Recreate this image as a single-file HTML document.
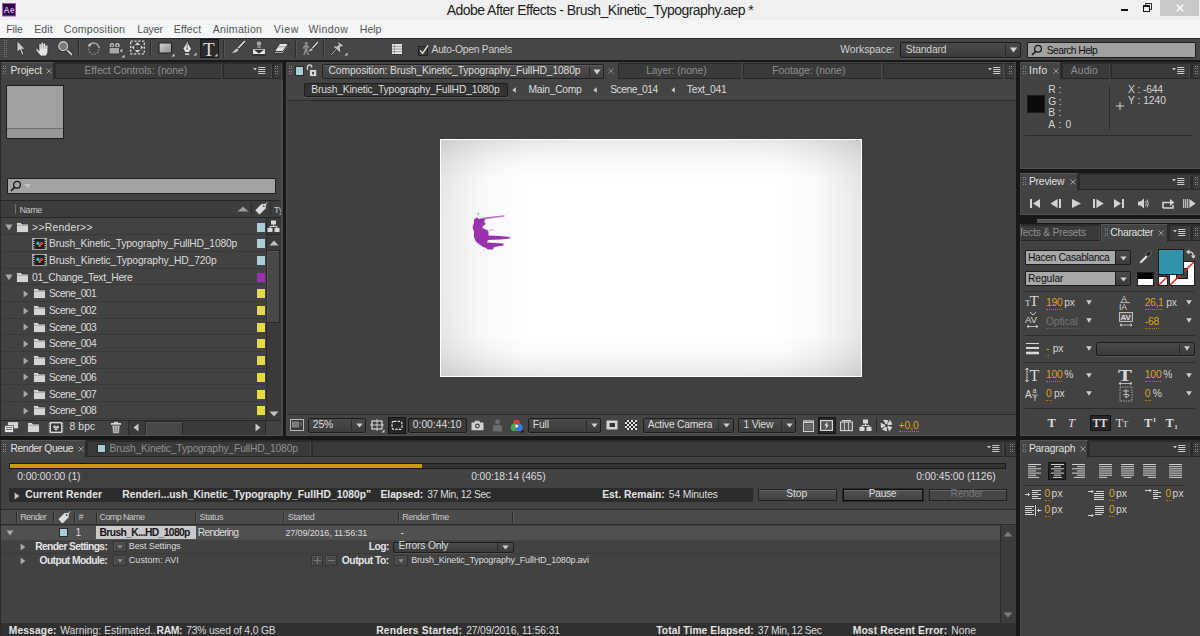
<!DOCTYPE html>
<html>
<head>
<meta charset="utf-8">
<title>Adobe After Effects</title>
<style>
*{box-sizing:border-box;margin:0;padding:0}
html,body{width:1200px;height:636px;overflow:hidden;background:#181818;font-family:"Liberation Sans",sans-serif;font-size:10.3px;color:#d0d0d0}
.a{position:absolute}
.t{position:absolute;white-space:nowrap;line-height:14px;height:14px}
.b{font-weight:bold}
#title{left:0;top:0;width:1200px;height:20px;background:#efefef}
#menu{left:0;top:20px;width:1200px;height:18px;background:#f5f6f7}
#menu .t{color:#545454;font-size:10.6px;top:2px}
#toolbar{left:0;top:38px;width:1200px;height:22px;background:#464646;border-top:1px solid #2a2a2a}
.panel{background:#424242}
.tabbar{background:#2c2c2c}
.tab{background:#424242}
.or{color:#dfa21c}
.dim{color:#8e8e8e}

.sep{top:2px;width:2px;height:18px;background:#2e2e2e;border-right:1px solid #555}
.grip::before,.grip::after{content:"";position:absolute;top:0;width:1px;height:100%;background:repeating-linear-gradient(180deg,#787878 0,#787878 1px,transparent 1px,transparent 2px)}.grip::before{left:0}.grip::after{left:2px}
.dd{background:linear-gradient(#4a4a4a,#3b3b3b);border:1px solid #1c1c1c;border-radius:2px;box-shadow:0 1px 0 #555}

.itab{background:#3a3a3a;border-top:1px solid #2a2a2a;border-left:1px solid #2c2c2c;border-bottom:1px solid #262626;border-right:1px solid #474747}
.grip2{width:3px;height:8px}.grip2::before,.grip2::after{content:"";position:absolute;top:0;width:1px;height:100%;background:repeating-linear-gradient(180deg,#8c8c8c 0,#8c8c8c 1px,transparent 1px,transparent 2.3px)}.grip2::before{left:0}.grip2::after{left:2px}
#toolbar>*{margin-top:-1px}#toolbar>.t{margin-top:0.3px}#toolbar>.cb{margin-top:0}
</style>
<style id="fit">
#ttl{left:446.80px!important;letter-spacing:-0.548px}
#mn0{left:6.20px!important;letter-spacing:-0.120px}
#mn1{left:34.20px!important;letter-spacing:0.084px}
#mn2{left:63.80px!important;letter-spacing:0.228px}
#mn3{left:137.20px!important;letter-spacing:-0.180px}
#mn4{left:173.80px!important;letter-spacing:0.082px}
#mn5{left:212.80px!important;letter-spacing:0.255px}
#mn6{left:273.80px!important;letter-spacing:0.600px}
#mn7{left:308.50px!important;letter-spacing:0.335px}
#mn8{left:359.80px!important;letter-spacing:-0.024px}
#aop{left:431.50px!important;letter-spacing:-0.241px}
#wsl{left:840.30px!important;letter-spacing:0.001px}
#std{left:905.80px!important;letter-spacing:-0.162px}
#sh{left:1046.80px!important;letter-spacing:-0.570px}
#pj{left:10.50px!important;letter-spacing:-0.052px}
#ec{left:84.50px!important;letter-spacing:-0.006px}
#nm{left:19.50px!important;letter-spacing:-0.404px}
#f0{left:32.10px!important;letter-spacing:0.277px}
#c1{left:49.00px!important;letter-spacing:-0.176px}
#c2{left:49.00px!important;letter-spacing:-0.150px}
#f1{left:32.00px!important;letter-spacing:-0.290px}
#bpc{left:69.50px!important;letter-spacing:0.119px}
#cpt{left:42.50px!important;letter-spacing:-0.112px}
#bc0{left:25.20px!important;letter-spacing:-0.171px}
#bc1{left:242.50px!important;letter-spacing:-0.280px}
#bc2{left:324.20px!important;letter-spacing:-0.501px}
#bc3{left:400.80px!important;letter-spacing:-0.262px}
#ly{left:360.20px!important;letter-spacing:-0.073px}
#ft{left:486.20px!important;letter-spacing:0.001px}
#zm{left:26.80px!important;letter-spacing:-0.070px}
#tc{left:126.80px!important;letter-spacing:0.003px}
#fl{left:246.80px!important;letter-spacing:-0.148px}
#ac{left:361.80px!important;letter-spacing:-0.241px}
#vw{left:457.50px!important;letter-spacing:-0.172px}
#ex{left:612.50px!important;letter-spacing:-0.007px}
#inf{left:8.90px!important;letter-spacing:0.428px}
#aud{left:50.70px!important;letter-spacing:0.191px}
#iR{left:28.30px!important;letter-spacing:-0.057px}
#iG{left:28.30px!important;letter-spacing:-0.200px}
#iB{left:28.30px!important;letter-spacing:0.135px}
#iA{left:28.30px!important;letter-spacing:0.558px}
#iX{left:108.10px!important;letter-spacing:-0.158px}
#iY{left:108.10px!important;letter-spacing:-0.046px}
#prv{left:8.90px!important;letter-spacing:-0.175px}
#fxp{left:0.10px!important;letter-spacing:-0.230px}
#chr{left:90.30px!important;letter-spacing:-0.269px}
#fnt{left:7.90px!important;letter-spacing:-0.338px}
#sty{left:7.90px!important;letter-spacing:-0.066px}
#v1{left:25.90px!important;letter-spacing:-0.196px}
#v1u{left:44.30px!important;letter-spacing:-0.200px}
#v2{left:124.70px!important;letter-spacing:-0.337px}
#v2u{left:146.30px!important;letter-spacing:-0.200px}
#v3{left:25.90px!important;letter-spacing:-0.038px}
#v4{left:124.70px!important;letter-spacing:-0.164px}
#v5{left:25.90px!important;letter-spacing:0.162px}
#v5u{left:32.70px!important;letter-spacing:-0.045px}
#v6{left:25.90px!important;letter-spacing:-0.196px}
#v6u{left:44.30px!important;letter-spacing:0.300px}
#v7{left:124.70px!important;letter-spacing:-0.129px}
#v7u{left:143.30px!important;letter-spacing:0.300px}
#v8{left:25.90px!important;letter-spacing:0.300px}
#v8u{left:34.10px!important;letter-spacing:-0.200px}
#v9{left:124.70px!important;letter-spacing:0.300px}
#v9u{left:132.80px!important;letter-spacing:0.300px}
#par{left:8.90px!important;letter-spacing:-0.199px}
#p1{left:24.50px!important;letter-spacing:0.266px}
#p1u{left:31.50px!important;letter-spacing:0.300px}
#p2{left:88.90px!important;letter-spacing:0.266px}
#p2u{left:95.90px!important;letter-spacing:0.105px}
#p3{left:145.50px!important;letter-spacing:0.266px}
#p3u{left:152.50px!important;letter-spacing:0.300px}
#p4{left:24.50px!important;letter-spacing:0.266px}
#p4u{left:31.50px!important;letter-spacing:0.300px}
#p5{left:88.90px!important;letter-spacing:0.266px}
#p5u{left:95.90px!important;letter-spacing:0.105px}
#rqt{left:10.50px!important;letter-spacing:-0.405px}
#rq2{left:109.50px!important;letter-spacing:-0.171px}
#t0{left:17.20px!important;letter-spacing:-0.059px}
#t1{left:471.20px!important;letter-spacing:-0.080px}
#t2{left:916.20px!important;letter-spacing:-0.072px}
#cr0{left:25.20px!important;letter-spacing:0.105px}
#cr1{left:122.20px!important;letter-spacing:0.018px}
#cr2{left:380.50px!important;letter-spacing:-0.028px}
#cr3{left:427.20px!important;letter-spacing:-0.385px}
#cr4{left:602.20px!important;letter-spacing:0.019px}
#cr5{left:668.80px!important;letter-spacing:-0.138px}
#b0{left:786.20px!important;letter-spacing:-0.047px}
#b1{left:868.80px!important;letter-spacing:-0.361px}
#b2{left:950.50px!important;letter-spacing:-0.247px}
#h0{left:20.20px!important;letter-spacing:-0.589px}
#h1{left:78.50px!important;letter-spacing:0.300px}
#h2{left:99.50px!important;letter-spacing:-0.613px}
#h3{left:199.50px!important;letter-spacing:-0.303px}
#h4{left:287.80px!important;letter-spacing:-0.333px}
#h5{left:402.20px!important;letter-spacing:-0.448px}
#r1{left:99.50px!important;letter-spacing:-0.611px}
#r2{left:197.80px!important;letter-spacing:-0.791px}
#r3{left:285.50px!important;letter-spacing:-0.136px}
#s0{left:35.20px!important;letter-spacing:-0.649px}
#s1{left:128.80px!important;letter-spacing:-0.102px}
#s2{left:368.80px!important;letter-spacing:-0.578px}
#s3{left:398.50px!important;letter-spacing:-0.216px}
#o0{left:39.50px!important;letter-spacing:-0.597px}
#o1{left:128.80px!important;letter-spacing:0.058px}
#o2{left:341.80px!important;letter-spacing:-0.484px}
#o3{left:411.20px!important;letter-spacing:-0.159px}
#m0{left:8.80px!important;letter-spacing:0.095px}
#m1{left:60.20px!important;letter-spacing:0.031px}
#m2{left:156.50px!important;letter-spacing:-0.298px}
#m3{left:186.20px!important;letter-spacing:-0.160px}
#m4{left:376.20px!important;letter-spacing:0.189px}
#m5{left:466.20px!important;letter-spacing:-0.149px}
#m6{left:656.20px!important;letter-spacing:0.067px}
#m7{left:757.80px!important;letter-spacing:-0.356px}
#m8{left:852.80px!important;letter-spacing:0.095px}
#m9{left:951.20px!important;letter-spacing:0.094px}
#sc1{left:49.00px!important;letter-spacing:-0.545px}
#sc2{left:49.00px!important;letter-spacing:-0.545px}
#sc3{left:49.00px!important;letter-spacing:-0.545px}
#sc4{left:49.00px!important;letter-spacing:-0.545px}
#sc5{left:49.00px!important;letter-spacing:-0.545px}
#sc6{left:49.00px!important;letter-spacing:-0.545px}
#sc7{left:49.00px!important;letter-spacing:-0.545px}
#sc8{left:49.00px!important;letter-spacing:-0.545px}
</style>
</head>
<body>
<!-- TITLE BAR -->
<div id="title" class="a">
  <svg class="a" style="left:2px;top:3px" width="14" height="14" viewBox="0 0 14 14"><rect x="0.5" y="0.5" width="13" height="12.5" fill="#241040" stroke="#b04fc0"/><text x="1.6" y="10.2" font-family="Liberation Sans" font-weight="bold" font-size="8.5" fill="#d79be8">Ae</text></svg>
  <div class="t" id="ttl" style="left:447px;top:1.2px;font-size:14px;color:#1e1e1e;line-height:18px;height:18px">Adobe After Effects - Brush_Kinetic_Typography.aep *</div>
  <div class="a" style="left:1121px;top:9px;width:7px;height:2px;background:#111"></div>
  <svg class="a" style="left:1142px;top:2px" width="11" height="11" viewBox="0 0 11 11"><path d="M3.5 3.5V1.5H9.5V7.5H7.5" fill="none" stroke="#222" stroke-width="1"/><rect x="1.5" y="3.5" width="6" height="6" fill="none" stroke="#111" stroke-width="1"/><rect x="1" y="3" width="7" height="2" fill="#111"/></svg>
  <div class="a" style="left:1160px;top:0;width:39px;height:16px;background:#c7c7c7"></div>
  <svg class="a" style="left:1176px;top:4px" width="8" height="8" viewBox="0 0 8 8"><path d="M0.7 0.7L7.3 7.3M7.3 0.7L0.7 7.3" stroke="#fff" stroke-width="1.3"/></svg>
</div>
<!-- MENU BAR -->
<div id="menu" class="a">
  <div class="t" id="mn0" style="left:6px">File</div>
  <div class="t" id="mn1" style="left:34px">Edit</div>
  <div class="t" id="mn2" style="left:64px">Composition</div>
  <div class="t" id="mn3" style="left:137px">Layer</div>
  <div class="t" id="mn4" style="left:174px">Effect</div>
  <div class="t" id="mn5" style="left:213px">Animation</div>
  <div class="t" id="mn6" style="left:274px">View</div>
  <div class="t" id="mn7" style="left:309px">Window</div>
  <div class="t" id="mn8" style="left:360px">Help</div>
</div>
<!-- TOOLBAR -->
<div id="toolbar" class="a">
  <!-- gripper -->
  <div class="a grip" style="left:4px;top:2px;width:3px;height:18px"></div>
  <!-- arrow -->
  <svg class="a" style="left:15px;top:2px" width="12" height="17" viewBox="0 0 12 17"><path d="M2 0.6L2 12.4L4.8 9.8L7 15.2L9 14.4L6.8 9.2L10.4 9.2Z" fill="#c8c8c8" stroke="#2a2a2a" stroke-width="0.8"/></svg>
  <!-- hand -->
  <svg class="a" style="left:35px;top:3px" width="16" height="16" viewBox="0 0 16 16"><g fill="#e4e4e4" stroke="#2a2a2a" stroke-width="0.7" stroke-linejoin="round"><path d="M5.6 15L3.4 12.2L0.9 8.9Q0.6 7.6 1.8 7.6Q2.6 7.6 3.1 8.4L4 9.6V3.4Q4 2.2 5 2.2Q6 2.2 6 3.4V2.4Q6 1.1 7.2 1.1Q8.4 1.1 8.4 2.4V3Q8.4 1.9 9.5 1.9Q10.7 1.9 10.7 3.1V4.6Q10.8 3.8 11.8 3.8Q12.9 3.8 12.9 5V10.2Q12.9 12 12 13.2L11.2 15Z"/></g><path d="M6.2 3.4V7.6M8.5 3.2V7.6M10.7 4.8V7.8" stroke="#8a8a8a" stroke-width="0.7"/></svg>
  <!-- magnifier -->
  <svg class="a" style="left:57px;top:2px" width="17" height="17" viewBox="0 0 17 17"><path d="M9 9L14.5 14.5" stroke="#2a2a2a" stroke-width="3.4" stroke-linecap="round"/><path d="M9 9L14.5 14.5" stroke="#c8c8c8" stroke-width="1.8" stroke-linecap="round"/><circle cx="6.2" cy="6.2" r="4.4" fill="#6a6a6a" stroke="#2a2a2a" stroke-width="2.6"/><circle cx="6.2" cy="6.2" r="4.4" fill="#7a7a7a" stroke="#c8c8c8" stroke-width="1.4"/></svg>
  <div class="a sep" style="left:78px"></div>
  <!-- orbit -->
  <svg class="a" style="left:86px;top:3px" width="16" height="16" viewBox="0 0 16 16"><circle cx="7.8" cy="8" r="5.3" fill="none" stroke="#8c8c8c" stroke-width="1.5" stroke-dasharray="1.4 1.6"/><path d="M3 4.8 A5.3 5.3 0 0 1 13 7" fill="none" stroke="#a8a8a8" stroke-width="1.4"/><path d="M1.6 4.2L4.6 2.6L4.4 5.8Z" fill="#c8c8c8"/></svg>
  <!-- camera -->
  <svg class="a" style="left:107px;top:3px" width="19" height="17" viewBox="0 0 19 17"><g stroke="#2a2a2a" stroke-width="0.8"><circle cx="5" cy="4.4" r="3" fill="#b8b8b8"/><circle cx="10.4" cy="4.4" r="3" fill="#b8b8b8"/><rect x="2" y="6.4" width="10.5" height="6.6" rx="1.3" fill="#a6a6a6"/><path d="M12.5 9L16 6.6V12.8L12.5 10.6Z" fill="#a6a6a6"/></g><circle cx="5" cy="4.4" r="0.9" fill="#444"/><circle cx="10.4" cy="4.4" r="0.9" fill="#444"/><path d="M17.5 13.5V16.5H14.5Z" fill="#d0d0d0"/></svg>
  <!-- pan behind -->
  <svg class="a" style="left:130px;top:2px" width="15" height="16" viewBox="0 0 15 16"><rect x="0.7" y="1.2" width="13.6" height="12.6" fill="none" stroke="#d8d8d8" stroke-width="1.3" stroke-dasharray="2.2 1.6"/><path d="M7.5 2.2L10.6 5.4H4.4ZM7.5 12.8L10.6 9.6H4.4ZM1.8 7.5L4.4 5.2V9.8ZM13.2 7.5L10.6 5.2V9.8Z" fill="#d8d8d8"/><rect x="5" y="5.8" width="5" height="3.4" fill="#555" stroke="#222" stroke-width="0.8"/></svg>
  <div class="a sep" style="left:150px"></div>
  <!-- rectangle -->
  <svg class="a" style="left:158px;top:4px" width="18" height="16" viewBox="0 0 18 16"><defs><linearGradient id="rg" x1="0" x2="1" y1="0" y2="1"><stop offset="0" stop-color="#d4d4d4"/><stop offset="1" stop-color="#8c8c8c"/></linearGradient></defs><rect x="1" y="1" width="12.6" height="10" rx="0.8" fill="url(#rg)" stroke="#222" stroke-width="1.2"/><path d="M16.5 11.5V14.5H13.5Z" fill="#d0d0d0"/></svg>
  <!-- pen -->
  <svg class="a" style="left:181px;top:1px" width="17" height="18" viewBox="0 0 17 18"><path d="M6.2 1L4.8 5L2 9.5L4.2 13.5H8.2L10.4 9.5L7.6 5Z" fill="#e2e2e2" stroke="#2a2a2a" stroke-width="0.8"/><path d="M6.2 4V9.5" stroke="#777" stroke-width="0.9"/><circle cx="6.2" cy="9.8" r="0.9" fill="#666"/><rect x="3.8" y="14" width="4.8" height="2.4" fill="#d0d0d0" stroke="#2a2a2a" stroke-width="0.6"/><path d="M15.5 13.5V16.5H12.5Z" fill="#d0d0d0"/></svg>
  <!-- T selected -->
  <div class="a" style="left:200px;top:1px;width:19px;height:19px;background:#2b2b2b;border:1px solid #1a1a1a"></div>
  <div class="t" style="left:203px;top:1px;font-family:'Liberation Serif',serif;font-size:19px;line-height:19px;height:19px;color:#dcdcdc">T</div>
  <svg class="a" style="left:214px;top:15px" width="4" height="4" viewBox="0 0 4 4"><path d="M3.5 0.5V3.5H0.5Z" fill="#d0d0d0"/></svg>
  <div class="a sep" style="left:223px"></div>
  <!-- brush -->
  <svg class="a" style="left:230px;top:2px" width="17" height="16" viewBox="0 0 17 16"><path d="M14.6 1.4L7.4 8.8" stroke="#2a2a2a" stroke-width="3.2" stroke-linecap="round"/><path d="M14.6 1.4L7.4 8.8" stroke="#d4d4d4" stroke-width="1.8" stroke-linecap="round"/><path d="M8.4 8L6 8.4Q3.6 10.6 1 13.4Q5.4 13.6 8.2 11.4Q9.4 10 8.4 8Z" fill="#c8c8c8" stroke="#2a2a2a" stroke-width="0.7"/></svg>
  <!-- stamp -->
  <svg class="a" style="left:251px;top:2px" width="16" height="17" viewBox="0 0 16 17"><circle cx="8" cy="3.6" r="2.8" fill="#a4a4a4" stroke="#2a2a2a" stroke-width="0.7"/><path d="M6.6 6H9.4L9.8 8.4H6.2Z" fill="#8a8a8a"/><path d="M1.6 8.6H14.4V14.6H1.6Z" fill="#e8e8e8" stroke="#2a2a2a" stroke-width="0.8"/><path d="M3 9.8H13L8 13.4Z" fill="#2a2a2a"/><rect x="1.2" y="14.4" width="13.6" height="1.4" fill="#2a2a2a"/></svg>
  <!-- eraser -->
  <svg class="a" style="left:273px;top:4px" width="17" height="13" viewBox="0 0 17 13"><path d="M6.8 1.4H15.6L10 9.6H1.4Z" fill="#e6e6e6" stroke="#2a2a2a" stroke-width="0.9"/><path d="M1.4 9.6H10L15.6 1.4V3.6L10 11.6H1.4Z" fill="#bdbdbd" stroke="#2a2a2a" stroke-width="0.9"/><path d="M4.6 4.8H13" stroke="#888" stroke-width="0.8"/></svg>
  <div class="a sep" style="left:295px"></div>
  <!-- roto brush -->
  <svg class="a" style="left:301px;top:3px" width="19" height="16" viewBox="0 0 19 16"><circle cx="5.2" cy="2.2" r="1.5" fill="#8a8a8a"/><path d="M3.6 4H6.8L8.6 7L7.6 7.6L6.6 6V9.4L8.2 14H6.6L5.2 10.4L3.8 14H2.2L3.6 9.2V6L2.2 8L1.2 7.4Z" fill="#8a8a8a"/><path d="M16.8 1.2L11 7.6" stroke="#2a2a2a" stroke-width="2.8" stroke-linecap="round"/><path d="M16.8 1.2L11 7.6" stroke="#d4d4d4" stroke-width="1.5" stroke-linecap="round"/><path d="M11.6 7L9.8 7.2Q8.4 8.8 6.6 10.6Q9.8 10.8 11.8 9.4Q12.4 8.2 11.6 7Z" fill="#c8c8c8" stroke="#2a2a2a" stroke-width="0.6"/></svg>
  <div class="a sep" style="left:323px"></div>
  <!-- pin -->
  <svg class="a" style="left:330px;top:2px" width="19" height="18" viewBox="0 0 19 18"><path d="M6.4 9L1.6 14.6" stroke="#2a2a2a" stroke-width="2.2" stroke-linecap="round"/><path d="M6.4 9L1.6 14.6" stroke="#bcbcbc" stroke-width="1" stroke-linecap="round"/><path d="M8.6 1.6L13.6 5.4L12.4 7L10.6 6.8L10.4 9.6L11.2 11.4L9.6 12.4L3.4 7L4.6 5.6L6.6 6.2L8.8 4.6L7.6 3Z" fill="#bdbdbd" stroke="#2a2a2a" stroke-width="0.8"/><path d="M17.5 12.5V15.5H14.5Z" fill="#d0d0d0"/></svg>
  <!-- panels icon -->
  <svg class="a" style="left:391px;top:5px" width="12" height="12" viewBox="0 0 12 12"><rect x="0.5" y="0.5" width="11" height="11" rx="1" fill="#e4e4e4" stroke="#2a2a2a" stroke-width="0.8"/><path d="M3.4 0.8V11.2M0.8 3.4H11.2M0.8 6H11.2M0.8 8.6H11.2" stroke="#8a8a8a" stroke-width="0.8"/></svg>
  <!-- checkbox -->
  <div class="a cb" style="left:418px;top:7px;width:10px;height:10px;background:#3a3a3a;border:1px solid #222"></div>
  <svg class="a cb" style="left:418px;top:5px" width="12" height="12" viewBox="0 0 12 12"><path d="M2.2 6.4L4.6 9.4L10 1.4" fill="none" stroke="#e4e4e4" stroke-width="1.4"/></svg>
  <div class="t" id="aop" style="left:432px;top:4px">Auto-Open Panels</div>
  <div class="t" id="wsl" style="left:841px;top:4px">Workspace:</div>
  <div class="a dd" style="left:900px;top:4px;width:121px;height:16px"></div>
  <div class="t" id="std" style="left:906px;top:4px">Standard</div>
  <div class="a" style="left:1005px;top:6px;width:1px;height:12px;background:#2a2a2a"></div>
  <svg class="a" style="left:1009px;top:9px" width="9" height="6" viewBox="0 0 9 6"><path d="M0.8 0.6H8.2L4.5 5.4Z" fill="#d0d0d0"/></svg>
  <!-- search help -->
  <div class="a" style="left:1027px;top:4px;width:169px;height:16px;background:#a1a1a1;border:1px solid #1e1e1e;border-radius:1px"></div>
  <svg class="a" style="left:1031px;top:6px" width="12" height="12" viewBox="0 0 12 12"><circle cx="7" cy="4.8" r="3.4" fill="none" stroke="#1a1a1a" stroke-width="1.3"/><path d="M4.6 7.4L1 11" stroke="#1a1a1a" stroke-width="1.6"/></svg>
  <div class="t" id="sh" style="left:1047px;top:5px;color:#111">Search Help</div>
</div>

<!-- PROJECT PANEL -->
<div id="project" class="a panel" style="left:0;top:62px;width:283px;height:374px;overflow:hidden"><div class="a" style="left:0;bottom:0;width:100%;height:1px;background:#505050;z-index:5"></div><div class="a" style="left:0;top:0;width:1px;height:100%;background:#2a2a2a;z-index:5"></div>
<div class="a tabbar" style="left:0;top:0;width:283px;height:17px"></div>
<div class="a tab" style="left:0;top:0;width:54px;height:18px;border-top:1px solid #555;border-right:1px solid #2a2a2a;background:#444"></div>
<div class="a grip2" style="left:3px;top:4px"></div>
<div class="t" id="pj" style="left:10px;top:2px;color:#e0e0e0">Project</div>
<svg class="a" style="left:46px;top:6px" width="6" height="6" viewBox="0 0 6 6"><path d="M0.5 0.5L5.5 5.5M5.5 0.5L0.5 5.5" stroke="#9c9c9c" stroke-width="1"/></svg>
<div class="a itab" style="left:55px;top:1px;width:167px;height:16px"></div>
<div class="t dim" id="ec" style="left:84px;top:2px">Effect Controls: (none)</div>
<div class="a itab" style="left:223px;top:1px;width:49px;height:16px"></div>
<svg class="a" style="left:253.0px;top:4.5px" width="13" height="8" viewBox="0 0 13 8"><path d="M0 1H4L2 3.6Z" fill="#c8c8c8"/><path d="M5.2 0.5H12.4M5.2 2.5H12.4M5.2 4.5H12.4M5.2 6.5H12.4" stroke="#c8c8c8" stroke-width="1"/></svg>
<div class="a itab" style="left:273px;top:1px;width:9px;height:16px"></div>
<div class="a grip2" style="left:275px;top:4px"></div>
<div class="a" style="left:6px;top:23px;width:58px;height:54px;background:#9f9f9f;border:1px solid #1e1e1e"></div>
<div class="a" style="left:7px;top:66px;width:56px;height:10px;background:#979797;border-top:1px solid #6e6e6e"></div>
<div class="a" style="left:7px;top:116px;width:269px;height:16px;background:#a3a3a3;border:1px solid #1e1e1e;border-radius:1px"></div>
<svg class="a" style="left:10px;top:118px" width="12" height="12" viewBox="0 0 12 12"><circle cx="7" cy="4.8" r="3.4" fill="none" stroke="#1a1a1a" stroke-width="1.3"/><path d="M4.6 7.4L1 11" stroke="#1a1a1a" stroke-width="1.6"/></svg>
<svg class="a" style="left:24px;top:122px" width="7" height="4" viewBox="0 0 7 4"><path d="M0 0H7L3.5 4Z" fill="#c4c4c4"/></svg>
<div class="a" style="left:0;top:138px;width:281px;height:18px;background:#3d3d3d;border-top:1px solid #262626;border-bottom:1px solid #262626"></div>
<div class="a" style="left:15px;top:142px;width:1px;height:10px;background:#707070"></div>
<div class="t" id="nm" style="left:19px;top:141px;font-size:9px;color:#c8c8c8">Name</div>
<svg class="a" style="left:237px;top:144px" width="12" height="6" viewBox="0 0 12 6"><path d="M0.5 5.5L6 0.5L11.5 5.5Z" fill="#9c9c9c"/></svg>
<div class="a" style="left:251px;top:141px;width:1px;height:12px;background:#2a2a2a"></div>
<svg class="a" style="left:254px;top:140px" width="14" height="14" viewBox="0 0 14 14"><path d="M1 8.2L7.4 1.8L11.4 1.4L12.4 2.6L12 6.4L5.4 13Z" fill="#dcdcdc" stroke="#2a2a2a" stroke-width="0.6"/><circle cx="9.8" cy="4" r="1" fill="#444"/><path d="M9.8 4Q12 1 13.4 0.6" stroke="#eee" stroke-width="0.8" fill="none"/></svg>
<div class="a" style="left:270px;top:141px;width:1px;height:12px;background:#2a2a2a"></div>
<div class="t" style="left:274px;top:141px;font-size:9px;color:#c8c8c8;width:7px;overflow:hidden">Ty</div>
<div class="a" style="left:0;top:156.5px;width:264px;height:16.7px;border-bottom:1px solid #393939"></div>
<svg class="a" style="left:5px;top:161.5px" width="8" height="7" viewBox="0 0 8 7"><path d="M0.4 0.6H7.6L4 6.2Z" fill="#a8a8a8"/></svg>
<svg class="a" style="left:16px;top:159.5px" width="13" height="11" viewBox="0 0 13 11"><path d="M0.5 1.5Q0.5 0.5 1.5 0.5H5L6 2H11.5Q12.5 2 12.5 3V9.5Q12.5 10.5 11.5 10.5H1.5Q0.5 10.5 0.5 9.5Z" fill="#d4d4d4" stroke="#2c2c2c" stroke-width="0.7"/><path d="M1 3.4H12" stroke="#9a9a9a" stroke-width="0.8"/></svg>
<div class="t" id="f0" style="left:32px;top:158.5px;color:#dcdcdc">&gt;&gt;Render&gt;&gt;</div>
<div class="a" style="left:257px;top:160.5px;width:8px;height:9px;background:#a9cfd6"></div>
<div class="a" style="left:0;top:173.2px;width:264px;height:16.7px;border-bottom:1px solid #393939"></div>
<svg class="a" style="left:32px;top:175.7px" width="15" height="12" viewBox="0 0 15 12"><rect x="0.5" y="0.5" width="14" height="11" fill="#1e1e1e" stroke="#bdbdbd" stroke-width="0.8"/><path d="M1.7 0.6V11.4M13.3 0.6V11.4" stroke="#d8d8d8" stroke-width="1.6" stroke-dasharray="1.1 1.1"/><circle cx="5.9" cy="5.2" r="1.7" fill="#2bb4d6"/><circle cx="9.5" cy="5.4" r="1.7" fill="#e03a2c"/><circle cx="7.6" cy="7.8" r="1.2" fill="#b98a3a"/></svg>
<div class="t" id="c1" style="left:49px;top:175.2px;color:#dcdcdc">Brush_Kinetic_Typography_FullHD_1080p</div>
<div class="a" style="left:257px;top:177.2px;width:8px;height:9px;background:#a9cfd6"></div>
<div class="a" style="left:0;top:189.9px;width:264px;height:16.7px;border-bottom:1px solid #393939"></div>
<svg class="a" style="left:32px;top:192.4px" width="15" height="12" viewBox="0 0 15 12"><rect x="0.5" y="0.5" width="14" height="11" fill="#1e1e1e" stroke="#bdbdbd" stroke-width="0.8"/><path d="M1.7 0.6V11.4M13.3 0.6V11.4" stroke="#d8d8d8" stroke-width="1.6" stroke-dasharray="1.1 1.1"/><circle cx="5.9" cy="5.2" r="1.7" fill="#2bb4d6"/><circle cx="9.5" cy="5.4" r="1.7" fill="#e03a2c"/><circle cx="7.6" cy="7.8" r="1.2" fill="#b98a3a"/></svg>
<div class="t" id="c2" style="left:49px;top:191.9px;color:#dcdcdc">Brush_Kinetic_Typography_HD_720p</div>
<div class="a" style="left:257px;top:193.9px;width:8px;height:9px;background:#a9cfd6"></div>
<div class="a" style="left:0;top:206.6px;width:264px;height:16.7px;border-bottom:1px solid #393939"></div>
<svg class="a" style="left:5px;top:211.6px" width="8" height="7" viewBox="0 0 8 7"><path d="M0.4 0.6H7.6L4 6.2Z" fill="#a8a8a8"/></svg>
<svg class="a" style="left:16px;top:209.6px" width="13" height="11" viewBox="0 0 13 11"><path d="M0.5 1.5Q0.5 0.5 1.5 0.5H5L6 2H11.5Q12.5 2 12.5 3V9.5Q12.5 10.5 11.5 10.5H1.5Q0.5 10.5 0.5 9.5Z" fill="#d4d4d4" stroke="#2c2c2c" stroke-width="0.7"/><path d="M1 3.4H12" stroke="#9a9a9a" stroke-width="0.8"/></svg>
<div class="t" id="f1" style="left:32px;top:208.6px;color:#dcdcdc">01_Change_Text_Here</div>
<div class="a" style="left:257px;top:210.6px;width:8px;height:9px;background:#9a31ad"></div>
<div class="a" style="left:0;top:223.3px;width:264px;height:16.7px;border-bottom:1px solid #393939"></div>
<svg class="a" style="left:22.5px;top:227.8px" width="6" height="8" viewBox="0 0 6 8"><path d="M0.6 0.4V7.6L5.4 4Z" fill="#a8a8a8"/></svg>
<svg class="a" style="left:32.5px;top:226.3px" width="13" height="11" viewBox="0 0 13 11"><path d="M0.5 1.5Q0.5 0.5 1.5 0.5H5L6 2H11.5Q12.5 2 12.5 3V9.5Q12.5 10.5 11.5 10.5H1.5Q0.5 10.5 0.5 9.5Z" fill="#d4d4d4" stroke="#2c2c2c" stroke-width="0.7"/><path d="M1 3.4H12" stroke="#9a9a9a" stroke-width="0.8"/></svg>
<div class="t" id="sc1" style="left:49px;top:225.3px;color:#dcdcdc">Scene_001</div>
<div class="a" style="left:257px;top:227.3px;width:8px;height:9px;background:#e6d848"></div>
<div class="a" style="left:0;top:240.0px;width:264px;height:16.7px;border-bottom:1px solid #393939"></div>
<svg class="a" style="left:22.5px;top:244.5px" width="6" height="8" viewBox="0 0 6 8"><path d="M0.6 0.4V7.6L5.4 4Z" fill="#a8a8a8"/></svg>
<svg class="a" style="left:32.5px;top:243.0px" width="13" height="11" viewBox="0 0 13 11"><path d="M0.5 1.5Q0.5 0.5 1.5 0.5H5L6 2H11.5Q12.5 2 12.5 3V9.5Q12.5 10.5 11.5 10.5H1.5Q0.5 10.5 0.5 9.5Z" fill="#d4d4d4" stroke="#2c2c2c" stroke-width="0.7"/><path d="M1 3.4H12" stroke="#9a9a9a" stroke-width="0.8"/></svg>
<div class="t" id="sc2" style="left:49px;top:242.0px;color:#dcdcdc">Scene_002</div>
<div class="a" style="left:257px;top:244.0px;width:8px;height:9px;background:#e6d848"></div>
<div class="a" style="left:0;top:256.7px;width:264px;height:16.7px;border-bottom:1px solid #393939"></div>
<svg class="a" style="left:22.5px;top:261.2px" width="6" height="8" viewBox="0 0 6 8"><path d="M0.6 0.4V7.6L5.4 4Z" fill="#a8a8a8"/></svg>
<svg class="a" style="left:32.5px;top:259.7px" width="13" height="11" viewBox="0 0 13 11"><path d="M0.5 1.5Q0.5 0.5 1.5 0.5H5L6 2H11.5Q12.5 2 12.5 3V9.5Q12.5 10.5 11.5 10.5H1.5Q0.5 10.5 0.5 9.5Z" fill="#d4d4d4" stroke="#2c2c2c" stroke-width="0.7"/><path d="M1 3.4H12" stroke="#9a9a9a" stroke-width="0.8"/></svg>
<div class="t" id="sc3" style="left:49px;top:258.7px;color:#dcdcdc">Scene_003</div>
<div class="a" style="left:257px;top:260.7px;width:8px;height:9px;background:#e6d848"></div>
<div class="a" style="left:0;top:273.4px;width:264px;height:16.7px;border-bottom:1px solid #393939"></div>
<svg class="a" style="left:22.5px;top:277.9px" width="6" height="8" viewBox="0 0 6 8"><path d="M0.6 0.4V7.6L5.4 4Z" fill="#a8a8a8"/></svg>
<svg class="a" style="left:32.5px;top:276.4px" width="13" height="11" viewBox="0 0 13 11"><path d="M0.5 1.5Q0.5 0.5 1.5 0.5H5L6 2H11.5Q12.5 2 12.5 3V9.5Q12.5 10.5 11.5 10.5H1.5Q0.5 10.5 0.5 9.5Z" fill="#d4d4d4" stroke="#2c2c2c" stroke-width="0.7"/><path d="M1 3.4H12" stroke="#9a9a9a" stroke-width="0.8"/></svg>
<div class="t" id="sc4" style="left:49px;top:275.4px;color:#dcdcdc">Scene_004</div>
<div class="a" style="left:257px;top:277.4px;width:8px;height:9px;background:#e6d848"></div>
<div class="a" style="left:0;top:290.1px;width:264px;height:16.7px;border-bottom:1px solid #393939"></div>
<svg class="a" style="left:22.5px;top:294.6px" width="6" height="8" viewBox="0 0 6 8"><path d="M0.6 0.4V7.6L5.4 4Z" fill="#a8a8a8"/></svg>
<svg class="a" style="left:32.5px;top:293.1px" width="13" height="11" viewBox="0 0 13 11"><path d="M0.5 1.5Q0.5 0.5 1.5 0.5H5L6 2H11.5Q12.5 2 12.5 3V9.5Q12.5 10.5 11.5 10.5H1.5Q0.5 10.5 0.5 9.5Z" fill="#d4d4d4" stroke="#2c2c2c" stroke-width="0.7"/><path d="M1 3.4H12" stroke="#9a9a9a" stroke-width="0.8"/></svg>
<div class="t" id="sc5" style="left:49px;top:292.1px;color:#dcdcdc">Scene_005</div>
<div class="a" style="left:257px;top:294.1px;width:8px;height:9px;background:#e6d848"></div>
<div class="a" style="left:0;top:306.8px;width:264px;height:16.7px;border-bottom:1px solid #393939"></div>
<svg class="a" style="left:22.5px;top:311.3px" width="6" height="8" viewBox="0 0 6 8"><path d="M0.6 0.4V7.6L5.4 4Z" fill="#a8a8a8"/></svg>
<svg class="a" style="left:32.5px;top:309.8px" width="13" height="11" viewBox="0 0 13 11"><path d="M0.5 1.5Q0.5 0.5 1.5 0.5H5L6 2H11.5Q12.5 2 12.5 3V9.5Q12.5 10.5 11.5 10.5H1.5Q0.5 10.5 0.5 9.5Z" fill="#d4d4d4" stroke="#2c2c2c" stroke-width="0.7"/><path d="M1 3.4H12" stroke="#9a9a9a" stroke-width="0.8"/></svg>
<div class="t" id="sc6" style="left:49px;top:308.8px;color:#dcdcdc">Scene_006</div>
<div class="a" style="left:257px;top:310.8px;width:8px;height:9px;background:#e6d848"></div>
<div class="a" style="left:0;top:323.5px;width:264px;height:16.7px;border-bottom:1px solid #393939"></div>
<svg class="a" style="left:22.5px;top:328.0px" width="6" height="8" viewBox="0 0 6 8"><path d="M0.6 0.4V7.6L5.4 4Z" fill="#a8a8a8"/></svg>
<svg class="a" style="left:32.5px;top:326.5px" width="13" height="11" viewBox="0 0 13 11"><path d="M0.5 1.5Q0.5 0.5 1.5 0.5H5L6 2H11.5Q12.5 2 12.5 3V9.5Q12.5 10.5 11.5 10.5H1.5Q0.5 10.5 0.5 9.5Z" fill="#d4d4d4" stroke="#2c2c2c" stroke-width="0.7"/><path d="M1 3.4H12" stroke="#9a9a9a" stroke-width="0.8"/></svg>
<div class="t" id="sc7" style="left:49px;top:325.5px;color:#dcdcdc">Scene_007</div>
<div class="a" style="left:257px;top:327.5px;width:8px;height:9px;background:#e6d848"></div>
<div class="a" style="left:0;top:340.2px;width:264px;height:16.7px;border-bottom:1px solid #393939"></div>
<svg class="a" style="left:22.5px;top:344.7px" width="6" height="8" viewBox="0 0 6 8"><path d="M0.6 0.4V7.6L5.4 4Z" fill="#a8a8a8"/></svg>
<svg class="a" style="left:32.5px;top:343.2px" width="13" height="11" viewBox="0 0 13 11"><path d="M0.5 1.5Q0.5 0.5 1.5 0.5H5L6 2H11.5Q12.5 2 12.5 3V9.5Q12.5 10.5 11.5 10.5H1.5Q0.5 10.5 0.5 9.5Z" fill="#d4d4d4" stroke="#2c2c2c" stroke-width="0.7"/><path d="M1 3.4H12" stroke="#9a9a9a" stroke-width="0.8"/></svg>
<div class="t" id="sc8" style="left:49px;top:342.2px;color:#dcdcdc">Scene_008</div>
<div class="a" style="left:257px;top:344.2px;width:8px;height:9px;background:#e6d848"></div>
<div class="a" style="left:266px;top:156px;width:15px;height:202px;background:#3a3a3a;border-left:1px solid #2a2a2a"></div>
<svg class="a" style="left:267px;top:158px" width="13" height="13" viewBox="0 0 13 13"><rect x="4" y="0.5" width="5" height="4" fill="#d8d8d8"/><rect x="0.5" y="8" width="5" height="4" fill="#d8d8d8"/><rect x="7.5" y="8" width="5" height="4" fill="#d8d8d8"/><path d="M6.5 4.5V6.5M3 8V6.5H10V8" fill="none" stroke="#d8d8d8" stroke-width="1"/></svg>
<div class="a" style="left:266px;top:172px;width:15px;height:1px;background:#262626"></div>
<svg class="a" style="left:269px;top:178px" width="10" height="6" viewBox="0 0 10 6"><path d="M0.5 5.5L5 0.5L9.5 5.5Z" fill="#c0c0c0"/></svg>
<div class="a" style="left:266px;top:188px;width:14px;height:73px;background:#484848;border:1px solid #2a2a2a;box-shadow:inset 1px 1px 0 #565656"></div>
<svg class="a" style="left:269px;top:349px" width="10" height="6" viewBox="0 0 10 6"><path d="M0.5 0.5L5 5.5L9.5 0.5Z" fill="#c0c0c0"/></svg>
<div class="a" style="left:0;top:358px;width:283px;height:16px;background:#424242;border-top:1px solid #2a2a2a"></div>
<svg class="a" style="left:4px;top:359px" width="15" height="13" viewBox="0 0 15 13"><rect x="3.5" y="0.8" width="11" height="7" fill="#d6d6d6" stroke="#2a2a2a" stroke-width="0.6"/><rect x="0.5" y="4.5" width="9" height="7" fill="#e6e6e6" stroke="#2a2a2a" stroke-width="0.6"/><path d="M2 6.5H8M2 8.5H8" stroke="#555" stroke-width="0.8"/></svg>
<svg class="a" style="left:27px;top:360px" width="13" height="11" viewBox="0 0 13 11"><path d="M0.5 1.5Q0.5 0.5 1.5 0.5H5L6 2H11.5Q12.5 2 12.5 3V9.5Q12.5 10.5 11.5 10.5H1.5Q0.5 10.5 0.5 9.5Z" fill="#d4d4d4" stroke="#2c2c2c" stroke-width="0.7"/><path d="M1 3.4H12" stroke="#9a9a9a" stroke-width="0.8"/></svg>
<svg class="a" style="left:48px;top:359px" width="16" height="13" viewBox="0 0 16 13"><rect x="0.5" y="0.5" width="15" height="12" fill="#d8d8d8" stroke="#2a2a2a" stroke-width="0.6"/><rect x="3" y="2.4" width="10" height="8.2" fill="#3a3a3a"/><path d="M1.6 1V12M14.4 1V12" stroke="#444" stroke-width="1" stroke-dasharray="1.2 1.2"/><circle cx="6.6" cy="6" r="1.4" fill="#ccc"/><circle cx="9.6" cy="6.2" r="1.4" fill="#ccc"/><circle cx="8" cy="8.2" r="1.2" fill="#ccc"/></svg>
<div class="t" id="bpc" style="left:70px;top:357.5px;color:#dcdcdc">8 bpc</div>
<svg class="a" style="left:110px;top:359px" width="12" height="13" viewBox="0 0 12 13"><path d="M4 0.8H8V2H4Z" fill="#c8c8c8"/><rect x="1" y="2" width="10" height="1.8" fill="#d8d8d8"/><path d="M2 4.2H10L9.2 12.4H2.8Z" fill="#c4c4c4" stroke="#2a2a2a" stroke-width="0.5"/><path d="M4.4 5.4V11.2M6 5.4V11.2M7.6 5.4V11.2" stroke="#6a6a6a" stroke-width="0.7"/></svg>
<div class="a" style="left:128px;top:359px;width:138px;height:15px;background:#3a3a3a;border-left:1px solid #2a2a2a;border-right:1px solid #2a2a2a"></div>
<svg class="a" style="left:133px;top:361px" width="6" height="9" viewBox="0 0 6 9"><path d="M5.5 0.5L0.5 4.5L5.5 8.5Z" fill="#c8c8c8"/></svg>
<div class="a" style="left:145px;top:359px;width:38px;height:15px;background:#484848;border:1px solid #2a2a2a;box-shadow:inset 1px 1px 0 #565656"></div>
<svg class="a" style="left:255px;top:361px" width="6" height="9" viewBox="0 0 6 9"><path d="M0.5 0.5L5.5 4.5L0.5 8.5Z" fill="#c8c8c8"/></svg>

<div class="a" style="left:281px;top:18px;width:2px;height:356px;background:#4a4a4a"></div>
</div>

<!-- COMP PANEL -->
<div id="comp" class="a" style="left:286px;top:62px;width:730px;height:374px;overflow:hidden;background:#404040"><div class="a" style="left:0;bottom:0;width:100%;height:1px;background:#505050;z-index:5"></div><div class="a" style="left:0;top:0;width:1px;height:100%;background:#4c4c4c;z-index:5"></div>
<div class="a" style="left:0;top:0;width:730px;height:38px;background:#444"></div>
<div class="a grip2" style="left:3px;top:4px"></div>
<div class="a" style="left:8.5px;top:3.5px;width:9.5px;height:10.5px;background:#a9cfd6;border:1px solid #2a2a2a"></div>
<svg class="a" style="left:19.5px;top:2px" width="11.5" height="13.5" viewBox="0 0 10 12"><path d="M1.2 5V3Q1.2 0.8 3.2 0.8Q5 0.8 5 3" fill="none" stroke="#d8d8d8" stroke-width="1.2"/><rect x="3" y="5" width="6.4" height="6" fill="#d8d8d8" stroke="#2a2a2a" stroke-width="0.5"/><rect x="5.4" y="7" width="1.6" height="2.2" fill="#3a3a3a"/></svg>
<div class="a" style="left:36px;top:2px;width:282px;height:15px;background:linear-gradient(#4c4c4c,#404040);border:1px solid #222;border-radius:2px;box-shadow:inset 0 1px 0 #5c5c5c"></div>
<div class="t" id="cpt" style="left:42px;top:2px;color:#dcdcdc">Composition: Brush_Kinetic_Typography_FullHD_1080p</div>
<div class="a" style="left:303px;top:4px;width:1px;height:11px;background:#2a2a2a"></div>
<svg class="a" style="left:307px;top:7px" width="8" height="6" viewBox="0 0 8 6"><path d="M0.4 0.6H7.6L4 5.4Z" fill="#d0d0d0"/></svg>
<svg class="a" style="left:322px;top:6px" width="6" height="6" viewBox="0 0 6 6"><path d="M0.5 0.5L5.5 5.5M5.5 0.5L0.5 5.5" stroke="#8a8a8a" stroke-width="1"/></svg>
<div class="a itab" style="left:332px;top:1px;width:124px;height:16px"></div>
<div class="t dim" id="ly" style="left:360px;top:2px">Layer: (none)</div>
<div class="a itab" style="left:457px;top:1px;width:139px;height:16px"></div>
<div class="t dim" id="ft" style="left:486px;top:2px">Footage: (none)</div>
<div class="a itab" style="left:597px;top:1px;width:121px;height:16px"></div>
<svg class="a" style="left:702.0px;top:4.5px" width="13" height="8" viewBox="0 0 13 8"><path d="M0 1H4L2 3.6Z" fill="#c8c8c8"/><path d="M5.2 0.5H12.4M5.2 2.5H12.4M5.2 4.5H12.4M5.2 6.5H12.4" stroke="#c8c8c8" stroke-width="1"/></svg>
<div class="a itab" style="left:719px;top:1px;width:10px;height:16px"></div>
<div class="a grip2" style="left:723px;top:4px"></div>
<div class="a" style="left:18px;top:21px;width:204px;height:14px;background:#333;border:1px solid #1e1e1e;border-radius:2px;box-shadow:0 1px 0 #555"></div>
<div class="t" id="bc0" style="left:25px;top:20.5px;color:#dcdcdc">Brush_Kinetic_Typography_FullHD_1080p</div>
<svg class="a" style="left:226px;top:24.5px" width="4" height="6" viewBox="0 0 4 6"><path d="M3.8 0.3V5.7L0.3 3Z" fill="#c8c8c8"/></svg>
<div class="t" id="bc1" style="left:242.5px;top:20.5px;color:#dcdcdc">Main_Comp</div>
<svg class="a" style="left:307px;top:24.5px" width="4" height="6" viewBox="0 0 4 6"><path d="M3.8 0.3V5.7L0.3 3Z" fill="#c8c8c8"/></svg>
<div class="t" id="bc2" style="left:324.5px;top:20.5px;color:#dcdcdc">Scene_014</div>
<svg class="a" style="left:384.5px;top:24.5px" width="4" height="6" viewBox="0 0 4 6"><path d="M3.8 0.3V5.7L0.3 3Z" fill="#c8c8c8"/></svg>
<div class="t" id="bc3" style="left:401px;top:20.5px;color:#dcdcdc">Text_041</div>
<div class="a" style="left:0;top:38px;width:730px;height:1px;background:#2c2c2c"></div>
<div class="a" style="left:154px;top:77px;width:422px;height:238px;background:radial-gradient(ellipse 72% 72% at 50% 50%,rgba(0,0,0,0) 72%,rgba(0,0,0,0.045) 100%),linear-gradient(90deg,rgba(0,0,0,0.085) 0,rgba(0,0,0,0.053) 5.0%,rgba(0,0,0,0.024) 11.0%,rgba(0,0,0,0) 20%,rgba(0,0,0,0) 80%,rgba(0,0,0,0.024) 89.0%,rgba(0,0,0,0.053) 95.0%,rgba(0,0,0,0.085) 100%),linear-gradient(180deg,rgba(0,0,0,0.085) 0,rgba(0,0,0,0.053) 4.2%,rgba(0,0,0,0.024) 9.4%,rgba(0,0,0,0) 17%,rgba(0,0,0,0) 83%,rgba(0,0,0,0.024) 90.7%,rgba(0,0,0,0.053) 95.8%,rgba(0,0,0,0.085) 100%),#fff;border:1px solid #fff"></div>
<svg class="a" style="left:184px;top:150px" width="42" height="40" viewBox="0 0 42 40"><g fill="#9a32ad"><path d="M5.0 6.5L7.0 5.5L9.0 7.0L11.0 6.2L15.5 7.5L14.0 10.0L16.0 12.0L13.0 14.0L12.5 16.0L16.0 17.5L18.5 19.0L18.5 23.6L30.0 24.0L40.0 25.0L40.0 26.6L30.0 27.6L18.0 28.0L17.0 30.6L33.5 31.5L33.5 33.6L24.0 35.0L23.0 37.5L18.0 37.6L15.0 35.5L13.0 35.0L8.0 31.5L5.5 29.0L4.0 25.0L4.0 20.0L2.5 15.0L4.0 11.0L4.0 8.0Z"/><path d="M11.5 5.8L34.5 3.2L34.5 4.6L13.0 7.4Z" opacity="0.7"/><rect x="7.5" y="1.6" width="1.6" height="1"/><rect x="19" y="17.6" width="5" height="0.8" opacity="0.5"/></g></svg>
<div class="a" style="left:0;top:352px;width:730px;height:22px;background:#444;border-top:1px solid #2a2a2a"></div>
<svg class="a" style="left:4px;top:357px" width="14" height="12" viewBox="0 0 14 12"><rect x="0.5" y="0.5" width="13" height="11" fill="#3a3a3a" stroke="#b8b8b8" stroke-width="1"/><rect x="2.5" y="3" width="6" height="5" fill="#777" stroke="#aaa" stroke-width="0.6"/><path d="M10 4H12M10 6H12" stroke="#999" stroke-width="0.8"/></svg>
<div class="a dd" style="left:21.5px;top:356px;width:58.5px;height:15px"></div><div class="t" id="zm" style="left:27px;top:356px;color:#dcdcdc">25%</div><div class="a" style="left:65px;top:358px;width:1px;height:11px;background:#2a2a2a"></div><svg class="a" style="left:70px;top:361px" width="7" height="5" viewBox="0 0 7 5"><path d="M0.3 0.4H6.7L3.5 4.6Z" fill="#d0d0d0"/></svg>
<svg class="a" style="left:84px;top:357px" width="15" height="14" viewBox="0 0 15 14"><rect x="2" y="2" width="10" height="8" fill="none" stroke="#d8d8d8" stroke-width="1.2"/><path d="M7 0V12M0 6H14" stroke="#d8d8d8" stroke-width="0.9"/><path d="M14.5 10.5V13.5H11.5Z" fill="#d0d0d0"/></svg>
<div class="a" style="left:102px;top:355px;width:18px;height:17px;background:#262626;border:1px solid #161616"></div>
<svg class="a" style="left:105px;top:358px" width="12" height="11" viewBox="0 0 12 11"><rect x="1" y="1.4" width="10" height="8" rx="2" fill="none" stroke="#e0e0e0" stroke-width="1.2" stroke-dasharray="2.4 1.2"/></svg>
<div class="a" style="left:122px;top:356px;width:59px;height:15px;background:#3a3a3a;border:1px solid #1c1c1c;border-radius:2px;box-shadow:0 1px 0 #555"></div>
<div class="t" id="tc" style="left:127px;top:356px;color:#dcdcdc">0:00:44:10</div>
<svg class="a" style="left:185px;top:358px" width="13" height="11" viewBox="0 0 13 11"><path d="M0.5 2.5H3.2L4.2 0.8H8.2L9.2 2.5H12.5V10.2H0.5Z" fill="#d0d0d0"/><circle cx="6.4" cy="6" r="2.4" fill="#444"/><circle cx="6.4" cy="6" r="1.2" fill="#d0d0d0"/></svg>
<svg class="a" style="left:206px;top:357px" width="11" height="13" viewBox="0 0 11 13"><circle cx="5.5" cy="3" r="2.4" fill="#6c6c6c"/><path d="M1 12.5V8Q1 6 3.2 6H7.8Q10 6 10 8V12.5Z" fill="#6c6c6c"/></svg>
<svg class="a" style="left:223.5px;top:356.5px" width="14" height="14" viewBox="0 0 14 14"><circle cx="6.6" cy="4.4" r="3.6" fill="#d63a34"/><circle cx="4.4" cy="8.4" r="3.6" fill="#4aa84a"/><circle cx="9" cy="8.4" r="3.6" fill="#3b78d6"/><circle cx="6.7" cy="7" r="1.6" fill="#e8e8e8"/><path d="M13.5 10.5V13.5H10.5Z" fill="#111"/></svg>
<div class="a dd" style="left:241.5px;top:356px;width:73.5px;height:15px"></div><div class="t" id="fl" style="left:247px;top:356px;color:#dcdcdc">Full</div><div class="a" style="left:300px;top:358px;width:1px;height:11px;background:#2a2a2a"></div><svg class="a" style="left:304.5px;top:361px" width="7" height="5" viewBox="0 0 7 5"><path d="M0.3 0.4H6.7L3.5 4.6Z" fill="#d0d0d0"/></svg>
<svg class="a" style="left:320px;top:358px" width="12" height="10" viewBox="0 0 12 10"><rect x="0.5" y="0.5" width="11" height="9" fill="#d4d4d4"/><rect x="3.6" y="3" width="5.4" height="4" fill="#333"/></svg>
<svg class="a" style="left:339px;top:358px" width="12" height="10" viewBox="0 0 12 10"><rect width="12" height="10" fill="#e4e4e4"/><g fill="#2c2c2c"><rect x="0" y="0" width="2" height="2"/><rect x="4" y="0" width="2" height="2"/><rect x="8" y="0" width="2" height="2"/><rect x="2" y="2" width="2" height="2"/><rect x="6" y="2" width="2" height="2"/><rect x="10" y="2" width="2" height="2"/><rect x="0" y="4" width="2" height="2"/><rect x="4" y="4" width="2" height="2"/><rect x="8" y="4" width="2" height="2"/><rect x="2" y="6" width="2" height="2"/><rect x="6" y="6" width="2" height="2"/><rect x="10" y="6" width="2" height="2"/><rect x="0" y="8" width="2" height="2"/><rect x="4" y="8" width="2" height="2"/><rect x="8" y="8" width="2" height="2"/></g></svg>
<div class="a dd" style="left:356.5px;top:356px;width:91.0px;height:15px"></div><div class="t" id="ac" style="left:362px;top:356px;color:#dcdcdc">Active Camera</div><div class="a" style="left:432px;top:358px;width:1px;height:11px;background:#2a2a2a"></div><svg class="a" style="left:436.5px;top:361px" width="7" height="5" viewBox="0 0 7 5"><path d="M0.3 0.4H6.7L3.5 4.6Z" fill="#d0d0d0"/></svg>
<div class="a dd" style="left:451.5px;top:356px;width:58.5px;height:15px"></div><div class="t" id="vw" style="left:458px;top:356px;color:#dcdcdc">1 View</div><div class="a" style="left:495px;top:358px;width:1px;height:11px;background:#2a2a2a"></div><svg class="a" style="left:499.5px;top:361px" width="7" height="5" viewBox="0 0 7 5"><path d="M0.3 0.4H6.7L3.5 4.6Z" fill="#d0d0d0"/></svg>
<svg class="a" style="left:517px;top:357.5px" width="11" height="12" viewBox="0 0 11 12"><rect x="0.5" y="2.5" width="10" height="9" fill="#555" stroke="#d0d0d0" stroke-width="1"/><path d="M0 1H11" stroke="#d0d0d0" stroke-width="1.4"/><path d="M2 5H9M2 7H9M2 9H9" stroke="#888" stroke-width="0.8"/></svg>
<div class="a" style="left:531.5px;top:355px;width:18px;height:17px;background:#262626;border:1px solid #161616"></div>
<svg class="a" style="left:534px;top:358px" width="13" height="11" viewBox="0 0 13 11"><rect x="0.6" y="0.6" width="11.8" height="9.8" fill="#555" stroke="#e0e0e0" stroke-width="1.1"/><path d="M7.6 1.6L4.4 5.6H6.4L5.2 9.4L8.8 4.8H6.8Z" fill="#f0f0f0"/></svg>
<svg class="a" style="left:554px;top:357.5px" width="13" height="12" viewBox="0 0 13 12"><rect x="0.6" y="2" width="11.8" height="8.6" fill="#555" stroke="#d4d4d4" stroke-width="1.1"/><path d="M4.4 2V10.6M8.6 2V10.6" stroke="#d4d4d4" stroke-width="0.9"/><path d="M2 0.6H11" stroke="#d4d4d4" stroke-width="1.2"/></svg>
<svg class="a" style="left:573px;top:357px" width="13" height="13" viewBox="0 0 13 13"><rect x="4" y="0.5" width="5" height="4" fill="#d8d8d8"/><rect x="0.5" y="8" width="5" height="4" fill="#d8d8d8"/><rect x="7.5" y="8" width="5" height="4" fill="#d8d8d8"/><path d="M6.5 4.5V6.5M3 8V6.5H10V8" fill="none" stroke="#d8d8d8" stroke-width="1"/></svg>
<div class="a" style="left:589.5px;top:356px;width:1px;height:15px;background:#2a2a2a"></div>
<svg class="a" style="left:594px;top:357px" width="13" height="13" viewBox="0 0 13 13"><g fill="#d8d8d8"><path d="M6.5 6.5L3 0.8L8.4 1.2Z"/><path d="M6.5 6.5L10 0.8L12.6 5.6Z"/><path d="M6.5 6.5L12.4 8L9.4 12.4Z"/><path d="M6.5 6.5L7 12.6L2 10.6Z"/><path d="M6.5 6.5L1 9.2L0.6 3.8Z"/></g><circle cx="6.5" cy="6.5" r="1.5" fill="#444"/></svg>
<div class="t or" id="ex" style="left:613px;top:356.5px;border-bottom:1px dotted #b07c10;height:13px;line-height:13px">+0,0</div>
</div>

<!-- INFO PANEL -->
<div id="info" class="a panel" style="left:1020px;top:62px;width:180px;height:107px;overflow:hidden"><div class="a" style="left:0;bottom:0;width:100%;height:1px;background:#505050;z-index:5"></div><div class="a" style="left:0;top:0;width:1px;height:100%;background:#4c4c4c;z-index:5"></div>
<div class="a tabbar" style="left:0;top:0;width:180px;height:17px"></div>
<div class="a tab" style="left:0;top:0;width:41px;height:18px;border-top:1px solid #555;border-right:1px solid #2a2a2a;background:#444"></div>
<div class="a grip2" style="left:3px;top:4px"></div>
<div class="t" id="inf" style="left:9px;top:2px;color:#e0e0e0">Info</div>
<svg class="a" style="left:32.5px;top:6px" width="6" height="6" viewBox="0 0 6 6"><path d="M0.5 0.5L5.5 5.5M5.5 0.5L0.5 5.5" stroke="#9c9c9c" stroke-width="1"/></svg>
<div class="a itab" style="left:42px;top:1px;width:48px;height:16px"></div>
<div class="t dim" id="aud" style="left:51px;top:2px">Audio</div>
<div class="a itab" style="left:91px;top:1px;width:79px;height:16px"></div>
<svg class="a" style="left:152.0px;top:4.5px" width="13" height="8" viewBox="0 0 13 8"><path d="M0 1H4L2 3.6Z" fill="#c8c8c8"/><path d="M5.2 0.5H12.4M5.2 2.5H12.4M5.2 4.5H12.4M5.2 6.5H12.4" stroke="#c8c8c8" stroke-width="1"/></svg>
<div class="a itab" style="left:171.5px;top:1px;width:10px;height:16px"></div>
<div class="a grip2" style="left:175px;top:4px"></div>
<div class="a" style="left:6.5px;top:32.5px;width:18px;height:18px;background:#0a0a0a;border:1px solid #1c1c1c"></div>
<div class="t" id="iR" style="left:28.5px;top:20.8px;color:#d4d4d4">R :</div>
<div class="t" id="iG" style="left:28.5px;top:32.6px;color:#d4d4d4">G :</div>
<div class="t" id="iB" style="left:28.5px;top:44.4px;color:#d4d4d4">B :</div>
<div class="t" id="iA" style="left:28.5px;top:56.2px;color:#d4d4d4">A : 0</div>
<div class="a" style="left:88.5px;top:24px;width:1px;height:44px;background:#2c2c2c"></div>
<svg class="a" style="left:96px;top:40px" width="8" height="8" viewBox="0 0 8 8"><path d="M4 0V8M0 4H8" stroke="#d4d4d4" stroke-width="1"/></svg>
<div class="t" id="iX" style="left:108.5px;top:20.8px;color:#d4d4d4">X : -644</div>
<div class="t" id="iY" style="left:108.5px;top:32.4px;color:#d4d4d4">Y : 1240</div>
<div class="a" style="left:5px;top:73px;width:168px;height:1px;background:#2c2c2c"></div>
</div>
<!-- PREVIEW PANEL -->
<div id="preview" class="a panel" style="left:1020px;top:173px;width:180px;height:42px;overflow:hidden"><div class="a" style="left:0;bottom:0;width:100%;height:1px;background:#505050;z-index:5"></div><div class="a" style="left:0;top:0;width:1px;height:100%;background:#4c4c4c;z-index:5"></div>
<div class="a tabbar" style="left:0;top:0;width:180px;height:17px"></div>
<div class="a tab" style="left:0;top:0;width:58px;height:18px;border-top:1px solid #555;border-right:1px solid #2a2a2a;background:#444"></div>
<div class="a grip2" style="left:3px;top:4px"></div>
<div class="t" id="prv" style="left:9px;top:2px;color:#e0e0e0">Preview</div>
<svg class="a" style="left:49.5px;top:6px" width="6" height="6" viewBox="0 0 6 6"><path d="M0.5 0.5L5.5 5.5M5.5 0.5L0.5 5.5" stroke="#9c9c9c" stroke-width="1"/></svg>
<div class="a itab" style="left:59px;top:1px;width:111px;height:16px"></div>
<svg class="a" style="left:152.0px;top:4.5px" width="13" height="8" viewBox="0 0 13 8"><path d="M0 1H4L2 3.6Z" fill="#c8c8c8"/><path d="M5.2 0.5H12.4M5.2 2.5H12.4M5.2 4.5H12.4M5.2 6.5H12.4" stroke="#c8c8c8" stroke-width="1"/></svg>
<div class="a itab" style="left:171.5px;top:1px;width:10px;height:16px"></div>
<div class="a grip2" style="left:175px;top:4px"></div>
<svg class="a" style="left:10px;top:25.5px" width="10" height="9" viewBox="0 0 10 9"><rect x="0" y="0" width="2" height="9" fill="#d2d2d2"/><path d="M10 0V9L3 4.5Z" fill="#d2d2d2"/></svg>
<svg class="a" style="left:30px;top:25.5px" width="11" height="9" viewBox="0 0 11 9"><rect x="9" y="0" width="2" height="9" fill="#d2d2d2"/><path d="M7.6 0V9L0.4 4.5Z" fill="#d2d2d2"/></svg>
<svg class="a" style="left:52px;top:25.5px" width="9" height="9" viewBox="0 0 9 9"><path d="M0 0V9L9 4.5Z" fill="#d2d2d2"/></svg>
<svg class="a" style="left:73px;top:25.5px" width="11" height="9" viewBox="0 0 11 9"><rect x="0" y="0" width="2" height="9" fill="#d2d2d2"/><path d="M3.4 0V9L10.6 4.5Z" fill="#d2d2d2"/></svg>
<svg class="a" style="left:94px;top:25.5px" width="10" height="9" viewBox="0 0 10 9"><rect x="8" y="0" width="2" height="9" fill="#d2d2d2"/><path d="M0 0V9L7 4.5Z" fill="#d2d2d2"/></svg>
<svg class="a" style="left:118px;top:24.5px" width="12" height="11" viewBox="0 0 12 11"><path d="M0 3.6H2.6L6 0.6V10.4L2.6 7.4H0Z" fill="#d2d2d2"/><path d="M7.6 3.2Q9 5.5 7.6 7.8M9 1.6Q11.6 5.5 9 9.4" fill="none" stroke="#d2d2d2" stroke-width="1"/></svg>
<svg class="a" style="left:141.5px;top:23.5px" width="13" height="12" viewBox="0 0 13 12"><path d="M1 11V5.5H9" fill="none" stroke="#d2d2d2" stroke-width="1.6"/><path d="M8 2L12.4 5.5L8 9Z" fill="#d2d2d2"/><path d="M1 11H11V8" fill="none" stroke="#d2d2d2" stroke-width="1.6"/></svg>
<svg class="a" style="left:163px;top:25.5px" width="13" height="9" viewBox="0 0 13 9"><path d="M0.7 0V9M2.7 0V9M4.7 0V9" stroke="#d2d2d2" stroke-width="1.1"/><path d="M6.4 0V9L12.6 4.5Z" fill="#d2d2d2"/></svg>
</div>
<div class="a" style="left:1037px;top:219px;width:163px;height:4px;background:#555;border-top:1px solid #666"></div>
<!-- CHARACTER PANEL -->
<div id="character" class="a panel" style="left:1020px;top:224px;width:180px;height:212px;overflow:hidden"><div class="a" style="left:0;bottom:0;width:100%;height:1px;background:#505050;z-index:5"></div><div class="a" style="left:0;top:0;width:1px;height:100%;background:#4c4c4c;z-index:5"></div>
<div class="a tabbar" style="left:0;top:0;width:180px;height:17px"></div>
<div class="a itab" style="left:-3px;top:1px;width:83px;height:16px"></div>
<div class="t dim" id="fxp" style="left:0.5px;top:2px">fects &amp; Presets</div>
<div class="a tab" style="left:81px;top:0;width:67px;height:18px;border-top:1px solid #555;border-right:1px solid #2a2a2a;border-left:1px solid #555;background:#444"></div>
<div class="a grip2" style="left:84.5px;top:4px"></div>
<div class="t" id="chr" style="left:90.5px;top:2px;color:#e0e0e0">Character</div>
<svg class="a" style="left:137.5px;top:6px" width="6" height="6" viewBox="0 0 6 6"><path d="M0.5 0.5L5.5 5.5M5.5 0.5L0.5 5.5" stroke="#9c9c9c" stroke-width="1"/></svg>
<div class="a itab" style="left:149px;top:1px;width:21px;height:16px"></div>
<svg class="a" style="left:152.5px;top:4.5px" width="13" height="8" viewBox="0 0 13 8"><path d="M0 1H4L2 3.6Z" fill="#c8c8c8"/><path d="M5.2 0.5H12.4M5.2 2.5H12.4M5.2 4.5H12.4M5.2 6.5H12.4" stroke="#c8c8c8" stroke-width="1"/></svg>
<div class="a itab" style="left:171.5px;top:1px;width:10px;height:16px"></div>
<div class="a grip2" style="left:175px;top:4px"></div>
<div class="a" style="left:5px;top:26px;width:106px;height:14.5px;background:#a8a8a8;border:1px solid #1c1c1c;border-radius:1px"></div><div class="a" style="left:95px;top:27px;width:15px;height:12.5px;background:linear-gradient(#4a4a4a,#3b3b3b);border-left:1px solid #1c1c1c"></div><svg class="a" style="left:99.5px;top:31.5px" width="7" height="5" viewBox="0 0 7 5"><path d="M0.3 0.4H6.7L3.5 4.6Z" fill="#d0d0d0"/></svg><div class="t" id="fnt" style="left:8px;top:26.5px;color:#111">Hacen Casablanca</div>
<div class="a" style="left:5px;top:47px;width:106px;height:14.5px;background:#a8a8a8;border:1px solid #1c1c1c;border-radius:1px"></div><div class="a" style="left:95px;top:48px;width:15px;height:12.5px;background:linear-gradient(#4a4a4a,#3b3b3b);border-left:1px solid #1c1c1c"></div><svg class="a" style="left:99.5px;top:52.5px" width="7" height="5" viewBox="0 0 7 5"><path d="M0.3 0.4H6.7L3.5 4.6Z" fill="#d0d0d0"/></svg><div class="t" id="sty" style="left:8px;top:47.5px;color:#111">Regular</div>
<svg class="a" style="left:118px;top:26px" width="14" height="15" viewBox="0 0 14 15"><path d="M1 14L2 11L8 5L10 7L4 13Z" fill="#d8d8d8" stroke="#2a2a2a" stroke-width="0.6"/><path d="M7 4L9.6 1.4Q11.4 0.2 12.8 1.6Q14 3 12.6 4.6L10.4 7Z" fill="#2a2a2a" stroke="#aaa" stroke-width="0.5"/></svg>
<div class="a" style="left:149px;top:37px;width:26px;height:25px;background:#fff;border:1px solid #1c1c1c"></div>
<div class="a" style="left:156px;top:44px;width:12px;height:11px;background:#424242;border:1px solid #1c1c1c"></div>
<svg class="a" style="left:149px;top:37px" width="26" height="25" viewBox="0 0 26 25"><path d="M1 24L25 1" stroke="#e0261e" stroke-width="1.6"/></svg>
<div class="a" style="left:138px;top:25px;width:25.5px;height:25.5px;background:#2f93a9;border:1px solid #1c1c1c"></div>
<svg class="a" style="left:166px;top:25px" width="10" height="10" viewBox="0 0 10 10"><path d="M2 3Q7 2 7.4 7" fill="none" stroke="#d8d8d8" stroke-width="1.3"/><path d="M0 3L3.4 0.4V5.6Z" fill="#d8d8d8"/><path d="M5 6.4H9.8L7.4 9.8Z" fill="#d8d8d8"/></svg>
<div class="a" style="left:116.5px;top:47.5px;width:17px;height:14px;background:linear-gradient(#000 0,#000 50%,#fff 50%,#fff 100%);border:1px solid #1c1c1c"></div>
<div class="a" style="left:137.5px;top:52px;width:10px;height:10px;background:#fff;border:1px solid #1c1c1c"></div>
<svg class="a" style="left:137.5px;top:52px" width="10" height="10" viewBox="0 0 10 10"><path d="M1 9L9 1" stroke="#e0261e" stroke-width="1.4"/></svg>
<div class="a" style="left:5px;top:67px;width:170px;height:1px;background:#2c2c2c"></div>
<div class="t" style="left:5px;top:73px;font-family:'Liberation Serif',serif;font-size:9px;color:#d8d8d8;line-height:12px">T</div>
<div class="t" style="left:9.5px;top:69px;font-family:'Liberation Serif',serif;font-size:15px;color:#d8d8d8;line-height:16px;height:16px">T</div>
<div class="t or" id="v1" style="left:26px;top:71.5px;border-bottom:1px dotted #b07c10;height:14px">190</div><div class="t" id="v1u" style="left:44.5px;top:71.5px;color:#d4d4d4">px</div>
<svg class="a" style="left:65.5px;top:76.0px" width="6" height="5" viewBox="0 0 6 5"><path d="M0.2 0.3H5.8L3 4.7Z" fill="#d0d0d0"/></svg>
<svg class="a" style="left:99px;top:70px" width="12" height="17" viewBox="0 0 12 17"><text x="2.2" y="7.5" font-family="Liberation Sans" font-size="8.5" fill="#d8d8d8">A</text><text x="0" y="16" font-family="Liberation Sans" font-size="8.5" fill="#d8d8d8">IA</text><path d="M1 8.6H11" stroke="#d8d8d8" stroke-width="0.8"/></svg>
<div class="t or" id="v2" style="left:125px;top:71.5px;border-bottom:1px dotted #b07c10;height:14px">26,1</div><div class="t" id="v2u" style="left:146.5px;top:71.5px;color:#d4d4d4">px</div>
<svg class="a" style="left:165.5px;top:76.0px" width="6" height="5" viewBox="0 0 6 5"><path d="M0.2 0.3H5.8L3 4.7Z" fill="#d0d0d0"/></svg>
<svg class="a" style="left:4.5px;top:87px" width="16" height="18" viewBox="0 0 16 18"><text x="0" y="12" font-family="Liberation Sans" font-size="9.5" fill="#d8d8d8">AV</text><path d="M5 1L8 4M11 1L8 4" stroke="#d8d8d8" stroke-width="0.9" fill="none"/><path d="M2 15.5H13M2 15.5L4 14M2 15.5L4 17M13 15.5L11 14M13 15.5L11 17" stroke="#d8d8d8" stroke-width="0.8" fill="none"/></svg>
<div class="t" id="v3" style="left:26px;top:90.5px;border-bottom:1px dotted #5e5e5e;height:14px;color:#727272">Optical</div>
<svg class="a" style="left:65.5px;top:94.0px" width="6" height="5" viewBox="0 0 6 5"><path d="M0.2 0.3H5.8L3 4.7Z" fill="#d0d0d0"/></svg>
<svg class="a" style="left:98.5px;top:88px" width="14" height="16" viewBox="0 0 14 16"><rect x="0.5" y="0.5" width="13" height="9" fill="#555" stroke="#d8d8d8" stroke-width="0.8"/><text x="1.4" y="8" font-family="Liberation Sans" font-size="8" font-weight="bold" fill="#d8d8d8">AV</text><path d="M1 13H13M1 13L3 11.4M1 13L3 14.6M13 13L11 11.4M13 13L11 14.6" stroke="#d8d8d8" stroke-width="0.8" fill="none"/></svg>
<div class="t or" id="v4" style="left:125px;top:90.5px;border-bottom:1px dotted #b07c10;height:14px">-68</div>
<svg class="a" style="left:165.5px;top:94.0px" width="6" height="5" viewBox="0 0 6 5"><path d="M0.2 0.3H5.8L3 4.7Z" fill="#d0d0d0"/></svg>
<div class="a" style="left:5px;top:111px;width:170px;height:1px;background:#2c2c2c"></div>
<svg class="a" style="left:6px;top:118px" width="13" height="13" viewBox="0 0 13 13"><path d="M0 1.5H13" stroke="#d8d8d8" stroke-width="1"/><path d="M0 6H13" stroke="#d8d8d8" stroke-width="2"/><path d="M0 11H13" stroke="#d8d8d8" stroke-width="2.6"/></svg>
<div class="t or" id="v5" style="left:26px;top:117.5px;border-bottom:1px dotted #b07c10;height:14px">-</div><div class="t" id="v5u" style="left:33px;top:117.5px;color:#d4d4d4">px</div>
<svg class="a" style="left:65.5px;top:122.0px" width="6" height="5" viewBox="0 0 6 5"><path d="M0.2 0.3H5.8L3 4.7Z" fill="#d0d0d0"/></svg>
<div class="a dd" style="left:76px;top:117.5px;width:99px;height:14px"></div>
<div class="a" style="left:159px;top:119.5px;width:1px;height:10px;background:#2a2a2a"></div>
<svg class="a" style="left:163.5px;top:122.0px" width="6" height="5" viewBox="0 0 6 5"><path d="M0.2 0.3H5.8L3 4.7Z" fill="#d0d0d0"/></svg>
<div class="a" style="left:5px;top:138px;width:170px;height:1px;background:#2c2c2c"></div>
<svg class="a" style="left:4.5px;top:143px" width="16" height="16" viewBox="0 0 16 16"><path d="M2 1V15M2 1L0.4 3M2 1L3.6 3M2 15L0.4 13M2 15L3.6 13" stroke="#d8d8d8" stroke-width="0.9" fill="none"/><text x="4.6" y="14" font-family="Liberation Serif" font-size="16" fill="#d8d8d8">T</text></svg>
<div class="t or" id="v6" style="left:26px;top:144.1px;border-bottom:1px dotted #b07c10;height:14px">100</div><div class="t" id="v6u" style="left:44.5px;top:144.1px;color:#d4d4d4">%</div>
<svg class="a" style="left:65.5px;top:148.5px" width="6" height="5" viewBox="0 0 6 5"><path d="M0.2 0.3H5.8L3 4.7Z" fill="#d0d0d0"/></svg>
<svg class="a" style="left:97.5px;top:144px" width="17" height="18" viewBox="0 0 17 18"><text x="0" y="12.6" font-family="Liberation Serif" font-size="16" font-weight="bold" fill="#d8d8d8" textLength="14" lengthAdjust="spacingAndGlyphs">T</text><path d="M1 15.5H14M1 15.5L3 14M1 15.5L3 17M14 15.5L12 14M14 15.5L12 17" stroke="#d8d8d8" stroke-width="0.8" fill="none"/></svg>
<div class="t or" id="v7" style="left:125px;top:144.1px;border-bottom:1px dotted #b07c10;height:14px">100</div><div class="t" id="v7u" style="left:143.5px;top:144.1px;color:#d4d4d4">%</div>
<svg class="a" style="left:165.5px;top:148.5px" width="6" height="5" viewBox="0 0 6 5"><path d="M0.2 0.3H5.8L3 4.7Z" fill="#d0d0d0"/></svg>
<svg class="a" style="left:4.5px;top:162px" width="16" height="16" viewBox="0 0 16 16"><text x="0" y="12" font-family="Liberation Sans" font-size="10" fill="#d8d8d8">A</text><text x="7.4" y="7" font-family="Liberation Sans" font-size="7" fill="#d8d8d8">a</text><path d="M7 9H13" stroke="#d8d8d8" stroke-width="0.8"/><path d="M10 15V10M10 10L8.6 11.6M10 10L11.4 11.6" stroke="#d8d8d8" stroke-width="0.8" fill="none"/></svg>
<div class="t or" id="v8" style="left:26px;top:162.8px;border-bottom:1px dotted #b07c10;height:14px">0</div><div class="t" id="v8u" style="left:34.5px;top:162.8px;color:#d4d4d4">px</div>
<svg class="a" style="left:65.5px;top:167.2px" width="6" height="5" viewBox="0 0 6 5"><path d="M0.2 0.3H5.8L3 4.7Z" fill="#d0d0d0"/></svg>
<svg class="a" style="left:99px;top:162px" width="14" height="16" viewBox="0 0 14 16"><rect x="1" y="1" width="12" height="14" fill="none" stroke="#d8d8d8" stroke-width="0.8" stroke-dasharray="1.2 1.2"/><path d="M4 5H10M7 3V12M4 9Q7 7 10 9Q9 12 6 11" stroke="#d8d8d8" stroke-width="0.8" fill="none"/></svg>
<div class="t or" id="v9" style="left:125px;top:162.8px;border-bottom:1px dotted #b07c10;height:14px">0</div><div class="t" id="v9u" style="left:133.5px;top:162.8px;color:#d4d4d4">%</div>
<svg class="a" style="left:165.5px;top:167.2px" width="6" height="5" viewBox="0 0 6 5"><path d="M0.2 0.3H5.8L3 4.7Z" fill="#d0d0d0"/></svg>
<div class="a" style="left:5px;top:184px;width:170px;height:1px;background:#2c2c2c"></div>
<div class="t" style="left:27.5px;top:190.7px;font-family:'Liberation Serif',serif;font-weight:bold;font-size:12.5px;line-height:16px;height:16px;color:#dcdcdc;">T</div>
<div class="t" style="left:48px;top:190.7px;font-family:'Liberation Serif',serif;font-weight:bold;font-size:12.5px;line-height:16px;height:16px;color:#dcdcdc;font-style:italic;font-weight:normal">T</div>
<div class="a" style="left:70px;top:190.5px;width:21px;height:16.5px;background:#262626;border:1px solid #141414"></div>
<div class="t" style="left:72.5px;top:190.7px;font-family:'Liberation Serif',serif;font-weight:bold;font-size:12.5px;line-height:16px;height:16px;color:#dcdcdc;font-size:11.5px;letter-spacing:-0.3px">TT</div>
<div class="t" style="left:95.5px;top:190.7px;font-family:'Liberation Serif',serif;font-weight:bold;font-size:12.5px;line-height:16px;height:16px;color:#dcdcdc;font-weight:normal;letter-spacing:-0.5px">T<span style="font-size:9px">T</span></div>
<div class="t" style="left:124px;top:190.7px;font-family:'Liberation Serif',serif;font-weight:bold;font-size:12.5px;line-height:16px;height:16px;color:#dcdcdc;">T<span style="font-size:7px;position:relative;top:-5px;left:0.5px">1</span></div>
<div class="t" style="left:145.5px;top:190.7px;font-family:'Liberation Serif',serif;font-weight:bold;font-size:12.5px;line-height:16px;height:16px;color:#dcdcdc;">T<span style="font-size:7px;position:relative;top:2px;left:0.5px">1</span></div>
</div>
<!-- PARAGRAPH PANEL -->
<div id="paragraph" class="a panel" style="left:1020px;top:440px;width:180px;height:196px;overflow:hidden"><div class="a" style="left:0;top:0;width:1px;height:100%;background:#4c4c4c;z-index:5"></div>
<div class="a tabbar" style="left:0;top:0;width:180px;height:17px"></div>
<div class="a tab" style="left:0;top:0;width:68px;height:18px;border-top:1px solid #555;border-right:1px solid #2a2a2a;background:#444"></div>
<div class="a grip2" style="left:3px;top:4px"></div>
<div class="t" id="par" style="left:9px;top:2px;color:#e0e0e0">Paragraph</div>
<svg class="a" style="left:60px;top:6px" width="6" height="6" viewBox="0 0 6 6"><path d="M0.5 0.5L5.5 5.5M5.5 0.5L0.5 5.5" stroke="#9c9c9c" stroke-width="1"/></svg>
<div class="a itab" style="left:69px;top:1px;width:101px;height:16px"></div>
<svg class="a" style="left:152.5px;top:4.5px" width="13" height="8" viewBox="0 0 13 8"><path d="M0 1H4L2 3.6Z" fill="#c8c8c8"/><path d="M5.2 0.5H12.4M5.2 2.5H12.4M5.2 4.5H12.4M5.2 6.5H12.4" stroke="#c8c8c8" stroke-width="1"/></svg>
<div class="a itab" style="left:171.5px;top:1px;width:10px;height:16px"></div>
<div class="a grip2" style="left:175px;top:4px"></div>
<svg class="a" style="left:8px;top:24px" width="13" height="14" viewBox="0 0 13 14"><path d="M0 0.50H13" stroke="#d0d0d0" stroke-width="1"/><path d="M0 2.65H8" stroke="#d0d0d0" stroke-width="1"/><path d="M0 4.80H13" stroke="#d0d0d0" stroke-width="1"/><path d="M0 6.95H8" stroke="#d0d0d0" stroke-width="1"/><path d="M0 9.10H13" stroke="#d0d0d0" stroke-width="1"/><path d="M0 11.25H8" stroke="#d0d0d0" stroke-width="1"/><path d="M0 13.40H11" stroke="#d0d0d0" stroke-width="1"/></svg>
<div class="a" style="left:28px;top:21.5px;width:18px;height:18px;background:#262626;border:1px solid #141414"></div>
<svg class="a" style="left:30.5px;top:24px" width="13" height="14" viewBox="0 0 13 14"><path d="M0.0 0.50H13.0" stroke="#d0d0d0" stroke-width="1"/><path d="M3.0 2.65H10.0" stroke="#d0d0d0" stroke-width="1"/><path d="M0.0 4.80H13.0" stroke="#d0d0d0" stroke-width="1"/><path d="M3.0 6.95H10.0" stroke="#d0d0d0" stroke-width="1"/><path d="M0.0 9.10H13.0" stroke="#d0d0d0" stroke-width="1"/><path d="M3.0 11.25H10.0" stroke="#d0d0d0" stroke-width="1"/><path d="M2.0 13.40H11.0" stroke="#d0d0d0" stroke-width="1"/></svg>
<svg class="a" style="left:52px;top:24px" width="13" height="14" viewBox="0 0 13 14"><path d="M0 0.50H13" stroke="#d0d0d0" stroke-width="1"/><path d="M5 2.65H13" stroke="#d0d0d0" stroke-width="1"/><path d="M0 4.80H13" stroke="#d0d0d0" stroke-width="1"/><path d="M5 6.95H13" stroke="#d0d0d0" stroke-width="1"/><path d="M0 9.10H13" stroke="#d0d0d0" stroke-width="1"/><path d="M5 11.25H13" stroke="#d0d0d0" stroke-width="1"/><path d="M2 13.40H13" stroke="#d0d0d0" stroke-width="1"/></svg>
<svg class="a" style="left:78.5px;top:24px" width="13" height="14" viewBox="0 0 13 14"><path d="M0 0.50H13" stroke="#d0d0d0" stroke-width="1"/><path d="M0 2.65H13" stroke="#d0d0d0" stroke-width="1"/><path d="M0 4.80H13" stroke="#d0d0d0" stroke-width="1"/><path d="M0 6.95H13" stroke="#d0d0d0" stroke-width="1"/><path d="M0 9.10H13" stroke="#d0d0d0" stroke-width="1"/><path d="M0 11.25H13" stroke="#d0d0d0" stroke-width="1"/><path d="M0 13.40H8" stroke="#d0d0d0" stroke-width="1"/></svg>
<svg class="a" style="left:100.5px;top:24px" width="13" height="14" viewBox="0 0 13 14"><path d="M0.0 0.50H13.0" stroke="#d0d0d0" stroke-width="1"/><path d="M0.0 2.65H13.0" stroke="#d0d0d0" stroke-width="1"/><path d="M0.0 4.80H13.0" stroke="#d0d0d0" stroke-width="1"/><path d="M0.0 6.95H13.0" stroke="#d0d0d0" stroke-width="1"/><path d="M0.0 9.10H13.0" stroke="#d0d0d0" stroke-width="1"/><path d="M0.0 11.25H13.0" stroke="#d0d0d0" stroke-width="1"/><path d="M2.5 13.40H10.5" stroke="#d0d0d0" stroke-width="1"/></svg>
<svg class="a" style="left:122.5px;top:24px" width="13" height="14" viewBox="0 0 13 14"><path d="M0 0.50H13" stroke="#d0d0d0" stroke-width="1"/><path d="M0 2.65H13" stroke="#d0d0d0" stroke-width="1"/><path d="M0 4.80H13" stroke="#d0d0d0" stroke-width="1"/><path d="M0 6.95H13" stroke="#d0d0d0" stroke-width="1"/><path d="M0 9.10H13" stroke="#d0d0d0" stroke-width="1"/><path d="M0 11.25H13" stroke="#d0d0d0" stroke-width="1"/><path d="M5 13.40H13" stroke="#d0d0d0" stroke-width="1"/></svg>
<svg class="a" style="left:148.5px;top:24px" width="13" height="14" viewBox="0 0 13 14"><path d="M0 0.50H13" stroke="#d0d0d0" stroke-width="1"/><path d="M0 2.65H13" stroke="#d0d0d0" stroke-width="1"/><path d="M0 4.80H13" stroke="#d0d0d0" stroke-width="1"/><path d="M0 6.95H13" stroke="#d0d0d0" stroke-width="1"/><path d="M0 9.10H13" stroke="#d0d0d0" stroke-width="1"/><path d="M0 11.25H13" stroke="#d0d0d0" stroke-width="1"/><path d="M0 13.40H13" stroke="#d0d0d0" stroke-width="1"/></svg>
<div class="a" style="left:5px;top:45px;width:160px;height:1px;background:#2c2c2c"></div>
<svg class="a" style="left:67.5px;top:50px" width="17" height="11" viewBox="0 0 17 11"><path d="M0 1.5H5M5 1.5L3.6 0M5 1.5L3.6 3" stroke="#d4d4d4" stroke-width="1" fill="none"/><path d="M8 1.5H16" stroke="#d4d4d4" stroke-width="1"/><path d="M6 3.5H16" stroke="#d4d4d4" stroke-width="1"/><path d="M6 5.5H16" stroke="#d4d4d4" stroke-width="1"/><path d="M6 7.5H16" stroke="#d4d4d4" stroke-width="1"/><path d="M6 9.5H16" stroke="#d4d4d4" stroke-width="1"/></svg>
<div class="t or" id="p1" style="left:25px;top:47.0px;border-bottom:1px dotted #b07c10;height:14px">0</div><div class="t" id="p1u" style="left:32.5px;top:47.0px;color:#d4d4d4">px</div>
<svg class="a" style="left:125px;top:49px" width="17" height="11" viewBox="0 0 17 11"><path d="M0 1.5H6M6 1.5L4.6 0M6 1.5L4.6 3" stroke="#d4d4d4" stroke-width="1" fill="none"/><path d="M8 1.5H13" stroke="#d4d4d4" stroke-width="1"/><path d="M8 3.5H16" stroke="#d4d4d4" stroke-width="1"/><path d="M8 5.5H13" stroke="#d4d4d4" stroke-width="1"/><path d="M8 7.5H16" stroke="#d4d4d4" stroke-width="1"/><path d="M8 9.5H13" stroke="#d4d4d4" stroke-width="1"/></svg>
<div class="t or" id="p2" style="left:89.5px;top:47.0px;border-bottom:1px dotted #b07c10;height:14px">0</div><div class="t" id="p2u" style="left:97.0px;top:47.0px;color:#d4d4d4">px</div>
<svg class="a" style="left:4.5px;top:65px" width="17" height="11" viewBox="0 0 17 11"><path d="M0 1.5H9" stroke="#d4d4d4" stroke-width="1"/><path d="M0 3.5H7" stroke="#d4d4d4" stroke-width="1"/><path d="M0 5.5H9" stroke="#d4d4d4" stroke-width="1"/><path d="M0 7.5H7" stroke="#d4d4d4" stroke-width="1"/><path d="M0 9.5H9" stroke="#d4d4d4" stroke-width="1"/><path d="M10.5 0V11" stroke="#d4d4d4" stroke-width="1"/><path d="M16.5 5.5H12.5M12.5 5.5L14 4M12.5 5.5L14 7" stroke="#d4d4d4" stroke-width="1" fill="none"/></svg>
<div class="t or" id="p3" style="left:146.5px;top:47.0px;border-bottom:1px dotted #b07c10;height:14px">0</div><div class="t" id="p3u" style="left:154.0px;top:47.0px;color:#d4d4d4">px</div>
<svg class="a" style="left:67.5px;top:66px" width="17" height="11" viewBox="0 0 17 11"><path d="M0 9.5H5M5 9.5L3.6 8M5 9.5L3.6 11" stroke="#d4d4d4" stroke-width="1" fill="none"/><path d="M7 0.5H16" stroke="#d4d4d4" stroke-width="1"/><path d="M7 2.5H16" stroke="#d4d4d4" stroke-width="1"/><path d="M7 4.5H16" stroke="#d4d4d4" stroke-width="1"/><path d="M7 6.5H16" stroke="#d4d4d4" stroke-width="1"/><path d="M7 8.5H14" stroke="#d4d4d4" stroke-width="1"/></svg>
<div class="t or" id="p4" style="left:25px;top:63.0px;border-bottom:1px dotted #b07c10;height:14px">0</div><div class="t" id="p4u" style="left:32.5px;top:63.0px;color:#d4d4d4">px</div>
<svg class="a" style="left:4.5px;top:50px" width="17" height="11" viewBox="0 0 17 11"><path d="M0 4.5H4.5M4.5 4.5L3 3M4.5 4.5L3 6" stroke="#d4d4d4" stroke-width="1" fill="none"/><path d="M7 0.5H16" stroke="#d4d4d4" stroke-width="1"/><path d="M7 2.5H13" stroke="#d4d4d4" stroke-width="1"/><path d="M7 4.5H16" stroke="#d4d4d4" stroke-width="1"/><path d="M7 6.5H13" stroke="#d4d4d4" stroke-width="1"/><path d="M7 8.5H16" stroke="#d4d4d4" stroke-width="1"/></svg>
<div class="t or" id="p5" style="left:89.5px;top:63.0px;border-bottom:1px dotted #b07c10;height:14px">0</div><div class="t" id="p5u" style="left:97.0px;top:63.0px;color:#d4d4d4">px</div>
</div>

<!-- RENDER QUEUE -->
<div id="rq" class="a panel" style="left:0;top:440px;width:1016px;height:196px;overflow:hidden"><div class="a" style="left:0;top:0;width:1px;height:100%;background:#2a2a2a;z-index:5"></div>
<div class="a tabbar" style="left:0;top:0;width:1016px;height:17px"></div>
<div class="a tab" style="left:0;top:0;width:86px;height:18px;border-top:1px solid #555;border-right:1px solid #2a2a2a;background:#444"></div>
<div class="a grip2" style="left:3px;top:4px"></div>
<div class="t" id="rqt" style="left:10px;top:2px;color:#e0e0e0">Render Queue</div>
<svg class="a" style="left:77.5px;top:6px" width="6" height="6" viewBox="0 0 6 6"><path d="M0.5 0.5L5.5 5.5M5.5 0.5L0.5 5.5" stroke="#9c9c9c" stroke-width="1"/></svg>
<div class="a itab" style="left:87px;top:1px;width:224px;height:16px"></div>
<div class="a" style="left:97px;top:4px;width:9px;height:9px;background:#a9cfd6;border:1px solid #2a2a2a"></div>
<div class="t dim" id="rq2" style="left:109px;top:2px">Brush_Kinetic_Typography_FullHD_1080p</div>
<div class="a itab" style="left:312px;top:1px;width:692px;height:16px"></div>
<svg class="a" style="left:987.0px;top:4.5px" width="13" height="8" viewBox="0 0 13 8"><path d="M0 1H4L2 3.6Z" fill="#c8c8c8"/><path d="M5.2 0.5H12.4M5.2 2.5H12.4M5.2 4.5H12.4M5.2 6.5H12.4" stroke="#c8c8c8" stroke-width="1"/></svg>
<div class="a itab" style="left:1005px;top:1px;width:10px;height:16px"></div>
<div class="a grip2" style="left:1009.5px;top:4px"></div>
<div class="a" style="left:9px;top:23px;width:997px;height:6px;background:#333;border:1px solid #1a1a1a"></div>
<div class="a" style="left:10px;top:24px;width:411.5px;height:4px;background:#cf970f"></div>
<div class="t" id="t0" style="left:17px;top:30.4px;color:#dcdcdc">0:00:00:00 (1)</div>
<div class="t" id="t1" style="left:471px;top:30.4px;color:#dcdcdc">0:00:18:14 (465)</div>
<div class="t" id="t2" style="left:916px;top:30.4px;color:#dcdcdc">0:00:45:00 (1126)</div>
<div class="a" style="left:9px;top:48px;width:744px;height:14px;background:#2c2c2c"></div>
<svg class="a" style="left:13.5px;top:51.5px" width="6" height="8" viewBox="0 0 6 8"><path d="M0.6 0.4V7.6L5.4 4Z" fill="#c8c8c8"/></svg>
<div class="t b" id="cr0" style="left:25px;top:48px;color:#e4e4e4">Current Render</div>
<div class="t b" id="cr1" style="left:122px;top:48px;color:#e4e4e4">Renderi...ush_Kinetic_Typography_FullHD_1080p”</div>
<div class="t b" id="cr2" style="left:380.5px;top:48px;color:#e4e4e4">Elapsed:</div>
<div class="t" id="cr3" style="left:427px;top:48px;color:#dcdcdc">37 Min, 12 Sec</div>
<div class="t b" id="cr4" style="left:602px;top:48px;color:#e4e4e4">Est. Remain:</div>
<div class="t" id="cr5" style="left:669px;top:48px;color:#dcdcdc">54 Minutes</div>
<div class="a" style="left:757.5px;top:48.5px;width:79.0px;height:12px;background:linear-gradient(#525252,#404040);border:1px solid #222;box-shadow:inset 0 1px 0 #666"></div><div class="t" id="b0" style="left:786px;top:47px;color:#dcdcdc">Stop</div>
<div class="a" style="left:842.5px;top:48.5px;width:80.0px;height:12px;background:linear-gradient(#525252,#404040);border:1px solid #0e0e0e;box-shadow:inset 0 1px 0 #666,0 0 0 1px #2a2a2a"></div><div class="t" id="b1" style="left:869px;top:47px;color:#dcdcdc">Pause</div>
<div class="a" style="left:928.5px;top:48.5px;width:78.0px;height:12px;background:#454545;border:1px solid #222;box-shadow:inset 0 1px 0 #666"></div><div class="t" id="b2" style="left:950.5px;top:47px;color:#777">Render</div>
<div class="a" style="left:0;top:69px;width:1016px;height:16px;background:#4b4b4b;border-top:1px solid #2a2a2a;border-bottom:1px solid #2a2a2a"></div>
<div class="a" style="left:15.5px;top:72px;width:1px;height:10px;background:#2a2a2a;box-shadow:1px 0 0 #5c5c5c"></div>
<div class="a" style="left:53px;top:72px;width:1px;height:10px;background:#2a2a2a;box-shadow:1px 0 0 #5c5c5c"></div>
<div class="a" style="left:74px;top:72px;width:1px;height:10px;background:#2a2a2a;box-shadow:1px 0 0 #5c5c5c"></div>
<div class="a" style="left:95.5px;top:72px;width:1px;height:10px;background:#2a2a2a;box-shadow:1px 0 0 #5c5c5c"></div>
<div class="a" style="left:195px;top:72px;width:1px;height:10px;background:#2a2a2a;box-shadow:1px 0 0 #5c5c5c"></div>
<div class="a" style="left:283px;top:72px;width:1px;height:10px;background:#2a2a2a;box-shadow:1px 0 0 #5c5c5c"></div>
<div class="a" style="left:398px;top:72px;width:1px;height:10px;background:#2a2a2a;box-shadow:1px 0 0 #5c5c5c"></div>
<div class="a" style="left:512px;top:72px;width:1px;height:10px;background:#2a2a2a;box-shadow:1px 0 0 #5c5c5c"></div>
<div class="t" id="h0" style="left:20px;top:70px;font-size:9px;color:#c8c8c8">Render</div>
<svg class="a" style="left:57px;top:70.5px" width="14" height="14" viewBox="0 0 14 14"><path d="M1 8.2L7.4 1.8L11.4 1.4L12.4 2.6L12 6.4L5.4 13Z" fill="#dcdcdc" stroke="#2a2a2a" stroke-width="0.6"/><circle cx="9.8" cy="4" r="1" fill="#444"/><path d="M9.8 4Q12 1 13.4 0.6" stroke="#eee" stroke-width="0.8" fill="none"/></svg>
<div class="t" id="h1" style="left:78.5px;top:70px;font-size:9px;color:#c8c8c8">#</div>
<div class="t" id="h2" style="left:99.5px;top:70px;font-size:9px;color:#c8c8c8">Comp Name</div>
<div class="t" id="h3" style="left:199.5px;top:70px;font-size:9px;color:#c8c8c8">Status</div>
<div class="t" id="h4" style="left:288px;top:70px;font-size:9px;color:#c8c8c8">Started</div>
<div class="t" id="h5" style="left:402px;top:70px;font-size:9px;color:#c8c8c8">Render Time</div>
<div class="a" style="left:0;top:85.5px;width:1000px;height:14px;background:#505050"></div>
<svg class="a" style="left:5.5px;top:90px" width="8" height="6" viewBox="0 0 8 6"><path d="M0.4 0.4H7.6L4 5.6Z" fill="#a8a8a8"/></svg>
<div class="a" style="left:58.5px;top:88px;width:9px;height:9px;background:#a9cfd6;border:1px solid #2a2a2a"></div>
<div class="t" id="r0" style="left:75.5px;top:86.3px;color:#dcdcdc">1</div>
<div class="a" style="left:96px;top:86px;width:100px;height:13px;background:#c9c9c9"></div>
<div class="t b" id="r1" style="left:99.5px;top:86.3px;color:#161616">Brush_K...HD_1080p</div>
<div class="t" id="r2" style="left:198px;top:86.3px;color:#dcdcdc">Rendering</div>
<div class="t" id="r3" style="left:285.5px;top:86.3px;color:#dcdcdc;font-size:9px">27/09/2016, 11:56:31</div>
<div class="t" id="r4" style="left:400.5px;top:86.3px;color:#dcdcdc">-</div>
<div class="a" style="left:0;top:113px;width:1000px;height:1px;background:#3a3a3a"></div>
<svg class="a" style="left:20px;top:102.7px" width="6" height="8" viewBox="0 0 6 8"><path d="M0.6 0.4V7.6L5.4 4Z" fill="#a8a8a8"/></svg>
<div class="t b" id="s0" style="left:35px;top:100.3px;color:#e4e4e4">Render Settings:</div>
<div class="a" style="left:112.5px;top:101.2px;width:14px;height:11px;background:#484848;border:1px solid #333;box-shadow:inset 1px 1px 0 #555"></div><svg class="a" style="left:116.5px;top:104.7px" width="6" height="4" viewBox="0 0 6 4"><path d="M0.2 0.2H5.8L3 3.8Z" fill="#8a8a8a"/></svg>
<div class="t" id="s1" style="left:129px;top:99.3px;color:#dcdcdc;font-size:9px">Best Settings</div>
<div class="t b" id="s2" style="left:369px;top:100.3px;color:#e4e4e4">Log:</div>
<div class="a dd" style="left:393px;top:101.5px;width:120.5px;height:11px"></div>
<div class="t" id="s3" style="left:398.5px;top:99.3px;color:#dcdcdc">Errors Only</div>
<div class="a" style="left:497px;top:103px;width:1px;height:8px;background:#2a2a2a"></div>
<svg class="a" style="left:502px;top:104.5px" width="7" height="5" viewBox="0 0 7 5"><path d="M0.3 0.4H6.7L3.5 4.6Z" fill="#d0d0d0"/></svg>
<svg class="a" style="left:20px;top:116.7px" width="6" height="8" viewBox="0 0 6 8"><path d="M0.6 0.4V7.6L5.4 4Z" fill="#a8a8a8"/></svg>
<div class="t b" id="o0" style="left:39.5px;top:114.3px;color:#e4e4e4">Output Module:</div>
<div class="a" style="left:112.5px;top:115.2px;width:14px;height:11px;background:#484848;border:1px solid #333;box-shadow:inset 1px 1px 0 #555"></div><svg class="a" style="left:116.5px;top:118.7px" width="6" height="4" viewBox="0 0 6 4"><path d="M0.2 0.2H5.8L3 3.8Z" fill="#8a8a8a"/></svg>
<div class="t" id="o1" style="left:129px;top:113.3px;color:#dcdcdc;font-size:9px">Custom: AVI</div>
<div class="a" style="left:311px;top:115.2px;width:11.5px;height:11px;background:#484848;border:1px solid #353535;box-shadow:inset 1px 1px 0 #555"></div>
<svg class="a" style="left:313.5px;top:117.2px" width="7" height="7" viewBox="0 0 7 7"><path d="M3.5 0V7M0 3.5H7" stroke="#7a7a7a" stroke-width="1"/></svg>
<div class="a" style="left:325px;top:115.2px;width:11.5px;height:11px;background:#484848;border:1px solid #353535;box-shadow:inset 1px 1px 0 #555"></div>
<svg class="a" style="left:327.5px;top:117.2px" width="7" height="7" viewBox="0 0 7 7"><path d="M0 3.5H7" stroke="#7a7a7a" stroke-width="1"/></svg>
<div class="t b" id="o2" style="left:342px;top:114.3px;color:#e4e4e4">Output To:</div>
<div class="a" style="left:393.5px;top:115.2px;width:14px;height:11px;background:#484848;border:1px solid #333;box-shadow:inset 1px 1px 0 #555"></div><svg class="a" style="left:397.5px;top:118.7px" width="6" height="4" viewBox="0 0 6 4"><path d="M0.2 0.2H5.8L3 3.8Z" fill="#8a8a8a"/></svg>
<div class="t" id="o3" style="left:411.5px;top:113.3px;color:#dcdcdc;font-size:9px">Brush_Kinetic_Typography_FullHD_1080p.avi</div>
<div class="a" style="left:1000px;top:85.5px;width:16px;height:97px;background:#3c3c3c;border-left:1px solid #2a2a2a"></div>
<svg class="a" style="left:1003px;top:91px" width="10" height="6" viewBox="0 0 10 6"><path d="M0.5 5.5L5 0.5L9.5 5.5Z" fill="#7a7a7a"/></svg>
<svg class="a" style="left:1003px;top:172px" width="10" height="6" viewBox="0 0 10 6"><path d="M0.5 0.5L5 5.5L9.5 0.5Z" fill="#7a7a7a"/></svg>
<div class="a" style="left:0;top:183px;width:1016px;height:14px;background:#303030"></div>
<div class="t b" id="m0" style="left:9px;top:184.2px;color:#e4e4e4">Message:</div>
<div class="t" id="m1" style="left:60.5px;top:184.2px;color:#dcdcdc">Warning: Estimated..</div>
<div class="t b" id="m2" style="left:156.5px;top:184.2px;color:#e4e4e4">RAM:</div>
<div class="t" id="m3" style="left:186.5px;top:184.2px;color:#dcdcdc">73% used of 4,0 GB</div>
<div class="t b" id="m4" style="left:376.5px;top:184.2px;color:#e4e4e4">Renders Started:</div>
<div class="t" id="m5" style="left:466.5px;top:184.2px;color:#dcdcdc">27/09/2016, 11:56:31</div>
<div class="t b" id="m6" style="left:656.5px;top:184.2px;color:#e4e4e4">Total Time Elapsed:</div>
<div class="t" id="m7" style="left:758px;top:184.2px;color:#dcdcdc">37 Min, 12 Sec</div>
<div class="t b" id="m8" style="left:853px;top:184.2px;color:#e4e4e4">Most Recent Error:</div>
<div class="t" id="m9" style="left:951.5px;top:184.2px;color:#dcdcdc">None</div>
</div>

</body>
</html>
